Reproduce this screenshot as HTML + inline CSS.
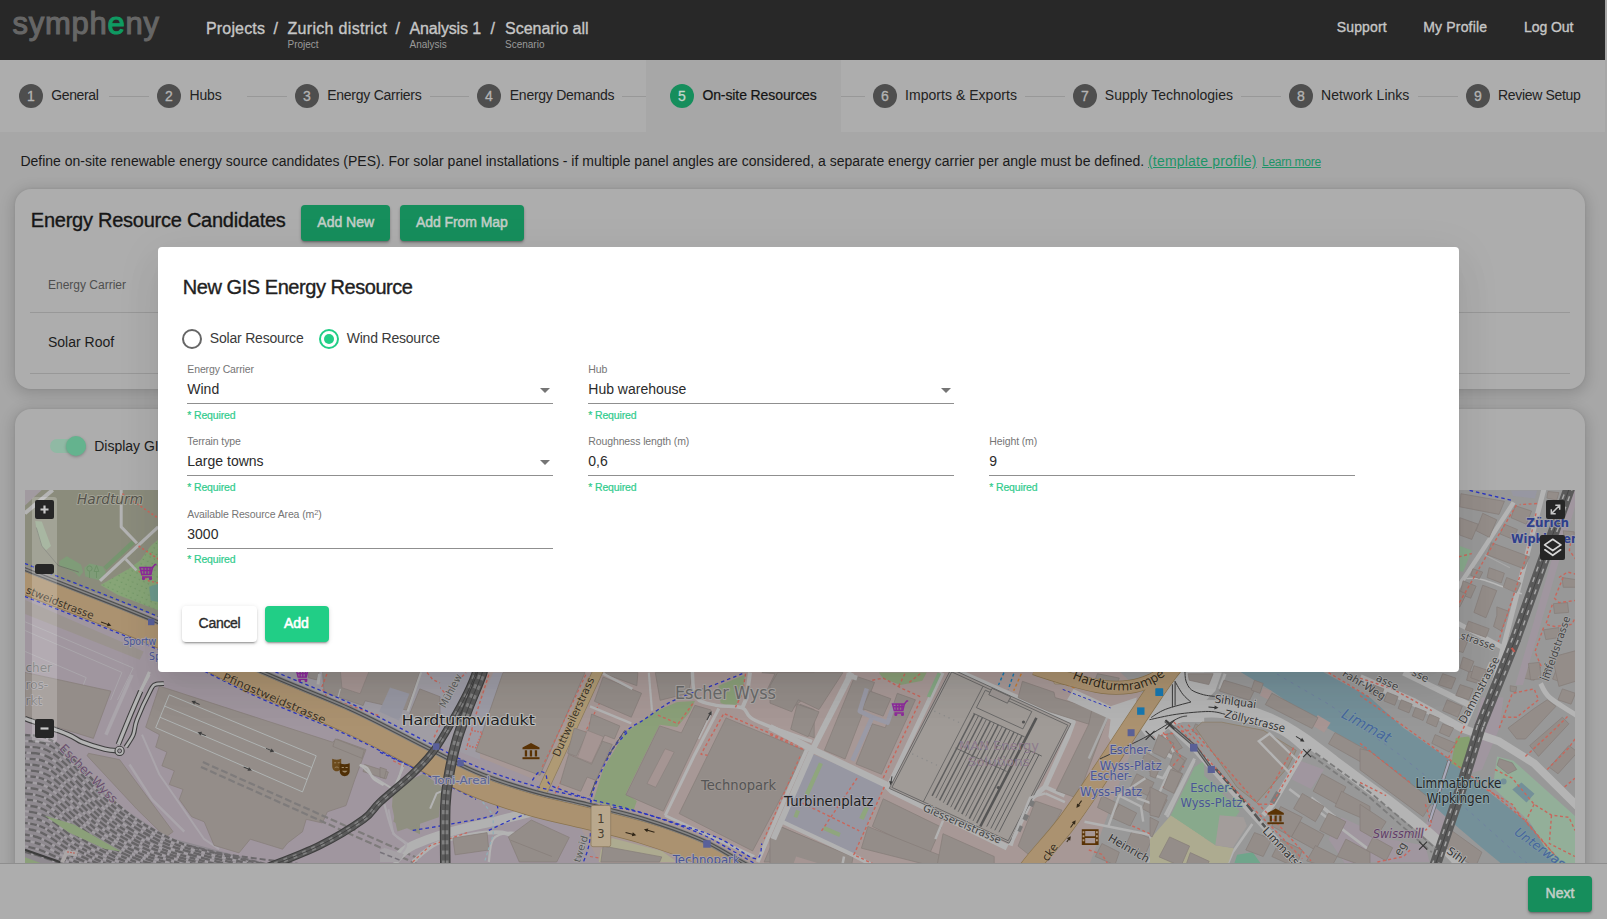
<!DOCTYPE html>
<html lang="en">
<head>
<meta charset="utf-8">
<title>Sympheny - On-site Resources</title>
<style>
*{box-sizing:border-box;margin:0;padding:0}
html,body{width:1607px;height:919px;overflow:hidden}
body{position:relative;background:#a7a7a7;font-family:"Liberation Sans",sans-serif;color:#1c1c1c}
.t{position:absolute;white-space:nowrap;line-height:1}
.md{-webkit-text-stroke:.35px currentColor}
#hdr{position:absolute;left:0;top:0;width:1605px;height:60px;background:#282828}
#logo{left:12.500px;top:8.200px;font-size:31px;color:#666;letter-spacing:.75px;-webkit-text-stroke:1.100px #666}
#logo b{font-weight:normal;color:#0f9a62;-webkit-text-stroke:1.100px #0f9a62}
.bc{font-size:16px;color:#c6c6c6;top:21.400px}
.bcs{font-size:10px;color:#9a9a9a;top:39.6px}
.nav{font-size:14px;color:#c6c6c6;top:20.2px}
#stp{position:absolute;left:0;top:60px;width:1605px;height:72px;background:#adadad}
#stp .act{position:absolute;left:646px;top:0;width:195px;height:72px;background:#a7a7a7}
.sc{-webkit-text-stroke:.3px currentColor;position:absolute;top:24px;width:24px;height:24px;border-radius:50%;background:#4e4e4e;color:#b4b4b4;font-size:14px;line-height:24px;text-align:center}
.sc.on{background:#168e5c;color:#c4d6cc}
.sl{font-size:14px;color:#222;top:28.2px}
.ln{position:absolute;top:36px;height:1px;background:#989898}
.card{position:absolute;background:#adadad;border-radius:16px;box-shadow:0 3px 14px 3px rgba(0,0,0,.14),0 0 3px rgba(0,0,0,.08)}
.gbtn{position:absolute;height:36px;border-radius:4px;background:#168e5c;box-shadow:0 2px 3px rgba(0,0,0,.25),0 1px 1px rgba(0,0,0,.15)}
.gbtn .t{font-size:14px;color:#c2cec8;top:10.2px;-webkit-text-stroke:.5px #c2cec8}
#map{position:absolute;left:25px;top:490px;width:1550px;height:373px;overflow:hidden;background:#a5a39e}
#map>svg{position:absolute;left:0;top:0}
.mb{position:absolute;background:#262626;border-radius:2px}
.mb svg{display:block}
#ftr{position:absolute;left:0;top:863px;width:1607px;height:56px;background:#adadad;border-top:1px solid #8e8e8e}
#dlg{position:absolute;left:158px;top:247px;width:1301px;height:425px;background:#fff;border-radius:4px;box-shadow:0 11px 15px -7px rgba(0,0,0,.05),0 24px 38px 3px rgba(0,0,0,.05),0 9px 46px 8px rgba(0,0,0,.04)}
#dlg .t{color:#2b2b2b}
.lab{font-size:10.5px;color:#757575 !important;letter-spacing:-.12px}
.val{font-size:14px}
.req{letter-spacing:-.15px;font-size:10.5px;color:#2fcb8c !important;-webkit-text-stroke:.2px #2fcb8c}
.ul{position:absolute;height:1px;background:#8f8f8f;width:366px}
.arr{position:absolute;width:0;height:0;border-left:5px solid transparent;border-right:5px solid transparent;border-top:5px solid #757575}
</style>
</head>
<body>
<!-- HEADER -->
<div id="hdr">
  <div id="logo" class="t">symph<b>e</b>ny</div>
  <div class="t bc md" style="left:206px;letter-spacing:.16px">Projects</div>
  <div class="t bc md" style="left:273.5px">/</div>
  <div class="t bc md" style="left:287.5px;letter-spacing:.31px">Zurich district</div>
  <div class="t bc md" style="left:395.5px">/</div>
  <div class="t bc md" style="left:409.5px;letter-spacing:-.15px">Analysis 1</div>
  <div class="t bc md" style="left:490.5px">/</div>
  <div class="t bc md" style="left:505px">Scenario all</div>
  <div class="t bcs" style="left:287.5px">Project</div>
  <div class="t bcs" style="left:409.5px">Analysis</div>
  <div class="t bcs" style="left:505px">Scenario</div>
  <div class="t nav md" style="left:1336.7px;letter-spacing:.16px">Support</div>
  <div class="t nav md" style="left:1423.2px;letter-spacing:.18px">My Profile</div>
  <div class="t nav md" style="left:1524px;letter-spacing:-.09px">Log Out</div>
</div>
<!-- STEPPER -->
<div id="stp">
  <div class="act"></div>
  <div class="sc" style="left:19px">1</div><div class="t sl" style="left:51.2px;letter-spacing:-.36px">General</div>
  <div class="ln" style="left:109px;width:40px"></div>
  <div class="sc" style="left:157px">2</div><div class="t sl" style="left:189.5px;letter-spacing:-.15px">Hubs</div>
  <div class="ln" style="left:247px;width:40px"></div>
  <div class="sc" style="left:295px">3</div><div class="t sl" style="left:327.2px;letter-spacing:-.25px">Energy Carriers</div>
  <div class="ln" style="left:430px;width:39px"></div>
  <div class="sc" style="left:477px">4</div><div class="t sl" style="left:509.8px;letter-spacing:-.26px">Energy Demands</div>
  <div class="ln" style="left:622px;width:24px"></div>
  <div class="sc on" style="left:670px">5</div><div class="t sl" style="left:702.4px;letter-spacing:-.1px;color:#141414;-webkit-text-stroke:.22px #141414">On-site Resources</div>
  <div class="ln" style="left:841px;width:24px"></div>
  <div class="sc" style="left:873px">6</div><div class="t sl" style="left:905px;letter-spacing:.04px">Imports &amp; Exports</div>
  <div class="ln" style="left:1025px;width:40px"></div>
  <div class="sc" style="left:1073px">7</div><div class="t sl" style="left:1104.8px">Supply Technologies</div>
  <div class="ln" style="left:1241px;width:40px"></div>
  <div class="sc" style="left:1289px">8</div><div class="t sl" style="left:1321.1px;letter-spacing:.03px">Network Links</div>
  <div class="ln" style="left:1418px;width:40px"></div>
  <div class="sc" style="left:1466px">9</div><div class="t sl" style="left:1498px;letter-spacing:-.33px">Review Setup</div>
</div>
<!-- DESCRIPTION -->
<div class="t" style="left:20.4px;top:153.8px;font-size:14px;color:#1a1a1a">Define on-site renewable energy source candidates (PES). For solar panel installations - if multiple panel angles are considered, a separate energy carrier per angle must be defined.</div>
<div class="t" style="left:1148px;top:153.8px;font-size:14px;color:#1d9467;text-decoration:underline;letter-spacing:.2px">(template profile)</div>
<div class="t" style="left:1262px;top:155.8px;font-size:12px;color:#1d9467;text-decoration:underline;letter-spacing:-.25px">Learn more</div>
<!-- CARD 1 -->
<div class="card" style="left:15px;top:189px;width:1570px;height:200px">
  <div class="t md" style="left:15.8px;top:21.1px;font-size:20px;color:#161616;letter-spacing:-.25px">Energy Resource Candidates</div>
  <div class="gbtn" style="left:286px;top:16px;width:89px"><div class="t md" style="left:16.3px">Add New</div></div>
  <div class="gbtn" style="left:385px;top:16px;width:124px"><div class="t md" style="left:16px;letter-spacing:-.07px">Add From Map</div></div>
  <div class="t" style="left:33px;top:89.9px;font-size:12px;color:#4f4f4f">Energy Carrier</div>
  <div style="position:absolute;left:15px;top:123px;width:1540px;height:1px;background:#989898"></div>
  <div class="t" style="left:33px;top:145.9px;font-size:14px;color:#1c1c1c">Solar Roof</div>
  <div style="position:absolute;left:15px;top:184px;width:1540px;height:1px;background:#989898"></div>
</div>
<!-- CARD 2 -->
<div class="card" style="left:15px;top:409px;width:1570px;height:520px">
  <div style="position:absolute;left:35px;top:30px;width:36px;height:14px;border-radius:7px;background:#90b9a4"></div>
  <div style="position:absolute;left:51px;top:27px;width:20px;height:20px;border-radius:50%;background:#64b38e;box-shadow:0 1px 3px rgba(0,0,0,.25)"></div>
  <div class="t" style="left:79.2px;top:29.5px;font-size:14px;color:#1c1c1c">Display GIS</div>
</div>
<!-- MAP -->
<div id="map">
<svg width="1550" height="373" viewBox="25 490 1550 373">
<path d="M25 490 L1575 490 L1575 863 L25 863Z" fill="#989898" />
<path d="M480 672 L1120 672 L1150 700 L1090 863 L480 863Z" fill="#a79896" />
<path d="M25 560 L158 615 L259 662 L420 733 L560 790 L600 863 L25 863Z" fill="#a0969f" />
<path d="M158 615 L480 672 L480 760 L259 672Z" fill="#9f9ba3" />
<path d="M25 490 L160 490 L160 618 L25 566Z" fill="#8b8c7c" />
<path d="M942.3 672.6 L889.4 784.3" fill="none" stroke="#b2b2b2" stroke-width="4.6" stroke-linecap="butt" stroke-linejoin="round" />
<path d="M953.6 669.4 L1073.3 722.0 L1067.8 736.8 L1045.0 786.9 L1031.9 798.2 L1012.3 839.1 L1010.2 845.6" fill="none" stroke="#b2b2b2" stroke-width="5" stroke-linecap="butt" stroke-linejoin="round" />
<path d="M1045.0 786.9 L1064.6 795.6" fill="none" stroke="#b2b2b2" stroke-width="4" stroke-linecap="butt" stroke-linejoin="round" />
<path d="M24.9 489.9 L41.8 489.9 L24.9 505.7Z" fill="#a19aa0" />
<path d="M24.9 513.3 L52.7 489.9" fill="none" stroke="#b4b4b4" stroke-width="4" stroke-linecap="butt" stroke-linejoin="round" />
<path d="M35.2 520.9 L41.8 521.5 L51.0 546.0 L46.1 550.3 L41.2 546.0 L36.3 528.5Z" fill="#93a58b" />
<path d="M59.2 561.2 L66.8 556.3 L81.0 564.5 L83.1 572.1 L79.3 577.0 L74.4 572.1 L59.2 566.1Z" fill="#7f9c78" />
<path d="M84.2 567.7 L89.7 563.4 L102.7 566.6 L106.0 572.1 L100.5 580.8 L85.3 576.4Z" fill="#7f9c78" />
<defs><pattern id="dots" width="5" height="5" patternUnits="userSpaceOnUse" patternTransform="rotate(25)"><rect width="5" height="5" fill="#87a577"/><circle cx="1.2" cy="1.2" r=".55" fill="#5f8a58"/></pattern></defs>
<path d="M158.2 539.4 L150.6 546.0 L140.8 560.1 L128.8 568.8 L113.6 577.5 L100.5 585.0 L118.0 594.9 L158.2 610.2Z" fill="url(#dots)" />
<path d="M149.1 586.7 L158.3 583.7 L158.3 602.0 L150.7 600.4Z" fill="#6d9a8d" />
<path d="M133.2 542.1 L104.9 568.3" fill="none" stroke="#76956f" stroke-width="4.5" stroke-linecap="butt" stroke-linejoin="round" />
<path d="M121.2 489.9 L121.2 526.9 L137.0 543.2" fill="none" stroke="#b3b3b3" stroke-width="3" stroke-linecap="butt" stroke-linejoin="round" />
<path d="M158.2 526.9 L100.0 580.8" fill="none" stroke="#b3b3b3" stroke-width="3.2" stroke-linecap="butt" stroke-linejoin="round" />
<path d="M125.6 559.0 L136.5 570.4" fill="none" stroke="#b3b3b3" stroke-width="2.6" stroke-linecap="butt" stroke-linejoin="round" />
<path d="M122.3 493.7 L158.2 518.2" fill="none" stroke="#c8675c" stroke-width="1.6" stroke-linecap="butt" stroke-linejoin="round" stroke-dasharray="2.2 2.2" />
<path d="M138.6 546.0 L158.2 559.0" fill="none" stroke="#c8675c" stroke-width="1.6" stroke-linecap="butt" stroke-linejoin="round" stroke-dasharray="2.2 2.2" />
<path d="M138.6 571.0 L148.4 580.8 L158.2 583.0" fill="none" stroke="#c8675c" stroke-width="1.4" stroke-linecap="butt" stroke-linejoin="round" stroke-dasharray="2.2 2.2" />
<path d="M36.3 527.5 L41.8 546.0 L58.1 565.5 L78.8 572.1" fill="none" stroke="#6f7067" stroke-width="0.8" stroke-linecap="butt" stroke-linejoin="round" />
<g stroke="#6f9169" stroke-width="1" fill="none"><circle cx="89.5" cy="568.5" r="2.6"/><path d="M89.5 571.2V578"/><path d="M96.5 565.5l2.4 6h-4.8zM96.5 571.5V578"/></g>
<g transform="translate(140 566) scale(1)" stroke="#8e2a9c" stroke-width="1.5" fill="none"><path d="M0 1.5h12.5l-1.6 7H1.8z" fill="#8e2a9c" fill-opacity=".25"/><path d="M12.5 1.5L15 -1.5h1.5M2 11h10M4 1.5v7M7 1.5v7M10 1.5v7M1 4.5h11"/><circle cx="3.5" cy="12.6" r=".9"/><circle cx="10.5" cy="12.6" r=".9"/></g>
<path d="M25.2 600.1 L143.7 651.5 L139.8 659.8 L25.2 614.0Z" fill="#9a938f" />
<path d="M25.2 621.9 L133.2 668.0 L117.5 700.0" fill="none" stroke="#aaa6ab" stroke-width="1" stroke-linecap="butt" stroke-linejoin="round" />
<path d="M25.2 630.6 L121.9 672.4 L110.6 700.0" fill="none" stroke="#aaa6ab" stroke-width="1" stroke-linecap="butt" stroke-linejoin="round" />
<path d="M25.2 651.5 L86.2 677.6 L77.5 700.0" fill="none" stroke="#aaa6ab" stroke-width="1" stroke-linecap="butt" stroke-linejoin="round" />
<path d="M25.0 672.4 L110.9 691.1 L93.4 738.4 L25.0 717.2Z" fill="#948d89" stroke="#857d78" stroke-width="0.7" />
<path d="M88.5 753.3 L119.6 759.6 L173.1 831.7 L165.6 837.2 L137.0 809.3 L87.2 755.8Z" fill="#948d89" stroke="#857d78" stroke-width="0.7" />
<path d="M25.0 769.5 L34.9 772.0 L32.4 784.5 L25.0 783.2Z" fill="#948d89" stroke="#857d78" stroke-width="0.7" />
<path d="M132.0 674.9 L105.9 734.7" fill="none" stroke="#aaa5ab" stroke-width="3.5" stroke-linecap="butt" stroke-linejoin="round" />
<path d="M149.4 674.9 L139.5 692.4" fill="none" stroke="#b2b2b2" stroke-width="2.5" stroke-linecap="butt" stroke-linejoin="round" />
<path d="M129.5 764.5 L151.9 799.4 L184.3 831.7" fill="none" stroke="#aaa5ab" stroke-width="2.5" stroke-linecap="butt" stroke-linejoin="round" />
<path d="M142.0 734.7 L159.4 774.5 L204.2 839.2 L219.1 849.2" fill="none" stroke="#aaa5ab" stroke-width="2" stroke-linecap="butt" stroke-linejoin="round" />
<path d="M25 735 L57 744 L118 805 L167 837 L265 863 L25 863Z" fill="#8f8a90" />
<path d="M25.0 735.0 C30.3 736.5 41.5 732.3 57.0 744.0 C72.5 755.7 99.7 789.5 118.0 805.0 C136.3 820.5 150.8 829.0 167.0 837.0 C183.2 845.0 192.8 847.2 215.0 853.0 C237.2 858.8 285.8 868.8 300.0 872.0" fill="none" stroke="#a29ea3" stroke-width="2.2" stroke-linecap="butt" />
<path d="M25.0 735.0 C30.3 736.5 41.5 732.3 57.0 744.0 C72.5 755.7 99.7 789.5 118.0 805.0 C136.3 820.5 150.8 829.0 167.0 837.0 C183.2 845.0 192.8 847.2 215.0 853.0 C237.2 858.8 285.8 868.8 300.0 872.0" fill="none" stroke="#666466" stroke-width="2.4" stroke-linecap="butt" stroke-dasharray="5.5 2.5" stroke-dashoffset="0"/>
<path d="M25.0 740.9 C30.2 742.4 41.1 738.4 56.1 749.6 C71.1 760.8 97.3 793.1 115.1 807.9 C132.9 822.7 147.0 830.9 162.7 838.6 C178.4 846.3 187.7 848.5 209.2 854.2 C230.7 859.9 277.8 869.8 291.5 872.9" fill="none" stroke="#a29ea3" stroke-width="2.2" stroke-linecap="butt" />
<path d="M25.0 740.9 C30.2 742.4 41.1 738.4 56.1 749.6 C71.1 760.8 97.3 793.1 115.1 807.9 C132.9 822.7 147.0 830.9 162.7 838.6 C178.4 846.3 187.7 848.5 209.2 854.2 C230.7 859.9 277.8 869.8 291.5 872.9" fill="none" stroke="#666466" stroke-width="2.4" stroke-linecap="butt" stroke-dasharray="6.7 4.0" stroke-dashoffset="7"/>
<path d="M25.0 746.7 C30.1 748.1 40.8 744.5 55.3 755.2 C69.8 765.9 95.0 796.6 112.2 810.8 C129.4 825.0 143.1 832.8 158.3 840.3 C173.5 847.8 182.7 849.9 203.5 855.5 C224.3 861.1 269.8 870.8 283.0 873.8" fill="none" stroke="#a29ea3" stroke-width="2.2" stroke-linecap="butt" />
<path d="M25.0 746.7 C30.1 748.1 40.8 744.5 55.3 755.2 C69.8 765.9 95.0 796.6 112.2 810.8 C129.4 825.0 143.1 832.8 158.3 840.3 C173.5 847.8 182.7 849.9 203.5 855.5 C224.3 861.1 269.8 870.8 283.0 873.8" fill="none" stroke="#666466" stroke-width="2.4" stroke-linecap="butt" stroke-dasharray="7.9 3.0" stroke-dashoffset="14"/>
<path d="M25.0 752.5 C29.9 753.9 40.4 750.6 54.4 760.8 C68.5 771.0 92.7 800.2 109.3 813.7 C125.9 827.2 139.2 834.7 153.9 841.9 C168.7 849.1 177.7 851.3 197.8 856.8 C217.9 862.3 261.7 871.7 274.5 874.7" fill="none" stroke="#a29ea3" stroke-width="2.2" stroke-linecap="butt" />
<path d="M25.0 752.5 C29.9 753.9 40.4 750.6 54.4 760.8 C68.5 771.0 92.7 800.2 109.3 813.7 C125.9 827.2 139.2 834.7 153.9 841.9 C168.7 849.1 177.7 851.3 197.8 856.8 C217.9 862.3 261.7 871.7 274.5 874.7" fill="none" stroke="#666466" stroke-width="2.4" stroke-linecap="butt" stroke-dasharray="9.1 4.5" stroke-dashoffset="21"/>
<path d="M25.0 758.4 C29.8 759.7 40.0 756.7 53.6 766.4 C67.2 776.1 90.4 803.7 106.4 816.6 C122.4 829.5 135.3 836.7 149.6 843.6 C163.9 850.5 172.6 852.7 192.0 858.0 C211.4 863.3 253.7 872.7 266.0 875.6" fill="none" stroke="#a29ea3" stroke-width="2.2" stroke-linecap="butt" />
<path d="M25.0 758.4 C29.8 759.7 40.0 756.7 53.6 766.4 C67.2 776.1 90.4 803.7 106.4 816.6 C122.4 829.5 135.3 836.7 149.6 843.6 C163.9 850.5 172.6 852.7 192.0 858.0 C211.4 863.3 253.7 872.7 266.0 875.6" fill="none" stroke="#666466" stroke-width="2.4" stroke-linecap="butt" stroke-dasharray="6.1 3.5" stroke-dashoffset="5"/>
<path d="M25.0 764.2 C29.6 765.5 39.7 762.8 52.8 772.0 C65.9 781.2 88.1 807.3 103.5 819.5 C118.9 831.7 131.4 838.6 145.2 845.2 C159.0 851.8 167.5 854.0 186.2 859.2 C204.9 864.4 245.6 873.6 257.5 876.5" fill="none" stroke="#a29ea3" stroke-width="2.2" stroke-linecap="butt" />
<path d="M25.0 764.2 C29.6 765.5 39.7 762.8 52.8 772.0 C65.9 781.2 88.1 807.3 103.5 819.5 C118.9 831.7 131.4 838.6 145.2 845.2 C159.0 851.8 167.5 854.0 186.2 859.2 C204.9 864.4 245.6 873.6 257.5 876.5" fill="none" stroke="#666466" stroke-width="2.4" stroke-linecap="butt" stroke-dasharray="7.3 2.5" stroke-dashoffset="12"/>
<path d="M25.0 770.1 C29.5 771.4 39.3 768.9 51.9 777.6 C64.5 786.3 85.8 810.9 100.6 822.4 C115.4 833.9 127.6 840.5 140.9 846.9 C154.2 853.2 162.5 855.4 180.5 860.5 C198.5 865.6 237.6 874.6 249.0 877.4" fill="none" stroke="#a29ea3" stroke-width="2.2" stroke-linecap="butt" />
<path d="M25.0 770.1 C29.5 771.4 39.3 768.9 51.9 777.6 C64.5 786.3 85.8 810.9 100.6 822.4 C115.4 833.9 127.6 840.5 140.9 846.9 C154.2 853.2 162.5 855.4 180.5 860.5 C198.5 865.6 237.6 874.6 249.0 877.4" fill="none" stroke="#666466" stroke-width="2.4" stroke-linecap="butt" stroke-dasharray="8.5 4.0" stroke-dashoffset="19"/>
<path d="M25.0 776.0 C29.4 777.2 39.0 775.0 51.1 783.2 C63.2 791.4 83.5 814.4 97.7 825.3 C112.0 836.2 123.8 842.5 136.6 848.6 C149.4 854.7 157.5 856.8 174.8 861.8 C192.1 866.8 229.6 875.5 240.5 878.3" fill="none" stroke="#a29ea3" stroke-width="2.2" stroke-linecap="butt" />
<path d="M25.0 776.0 C29.4 777.2 39.0 775.0 51.1 783.2 C63.2 791.4 83.5 814.4 97.7 825.3 C112.0 836.2 123.8 842.5 136.6 848.6 C149.4 854.7 157.5 856.8 174.8 861.8 C192.1 866.8 229.6 875.5 240.5 878.3" fill="none" stroke="#666466" stroke-width="2.4" stroke-linecap="butt" stroke-dasharray="5.5 3.0" stroke-dashoffset="3"/>
<path d="M25.0 781.8 C29.2 783.0 38.6 781.1 50.2 788.8 C61.8 796.5 81.1 818.0 94.8 828.2 C108.5 838.4 119.8 844.4 132.2 850.2 C144.6 856.0 152.4 858.2 169.0 863.0 C185.6 867.8 221.5 876.5 232.0 879.2" fill="none" stroke="#a29ea3" stroke-width="2.2" stroke-linecap="butt" />
<path d="M25.0 781.8 C29.2 783.0 38.6 781.1 50.2 788.8 C61.8 796.5 81.1 818.0 94.8 828.2 C108.5 838.4 119.8 844.4 132.2 850.2 C144.6 856.0 152.4 858.2 169.0 863.0 C185.6 867.8 221.5 876.5 232.0 879.2" fill="none" stroke="#666466" stroke-width="2.4" stroke-linecap="butt" stroke-dasharray="6.7 4.5" stroke-dashoffset="10"/>
<path d="M25.0 787.7 C29.1 788.8 38.2 787.2 49.4 794.4 C60.5 801.6 78.8 821.5 91.9 831.1 C105.0 840.7 116.0 846.4 127.9 851.9 C139.8 857.4 147.3 859.5 163.2 864.2 C179.1 868.9 213.4 877.5 223.5 880.1" fill="none" stroke="#a29ea3" stroke-width="2.2" stroke-linecap="butt" />
<path d="M25.0 787.7 C29.1 788.8 38.2 787.2 49.4 794.4 C60.5 801.6 78.8 821.5 91.9 831.1 C105.0 840.7 116.0 846.4 127.9 851.9 C139.8 857.4 147.3 859.5 163.2 864.2 C179.1 868.9 213.4 877.5 223.5 880.1" fill="none" stroke="#666466" stroke-width="2.4" stroke-linecap="butt" stroke-dasharray="7.9 3.5" stroke-dashoffset="17"/>
<path d="M25.0 793.5 C28.9 794.6 37.8 793.2 48.5 800.0 C59.2 806.8 76.5 825.1 89.0 834.0 C101.5 842.9 112.1 848.2 123.5 853.5 C134.9 858.8 142.2 860.9 157.5 865.5 C172.8 870.1 205.4 878.4 215.0 881.0" fill="none" stroke="#a29ea3" stroke-width="2.2" stroke-linecap="butt" />
<path d="M25.0 793.5 C28.9 794.6 37.8 793.2 48.5 800.0 C59.2 806.8 76.5 825.1 89.0 834.0 C101.5 842.9 112.1 848.2 123.5 853.5 C134.9 858.8 142.2 860.9 157.5 865.5 C172.8 870.1 205.4 878.4 215.0 881.0" fill="none" stroke="#666466" stroke-width="2.4" stroke-linecap="butt" stroke-dasharray="9.1 2.5" stroke-dashoffset="1"/>
<path d="M25.0 799.3 C28.8 800.3 37.4 799.3 47.6 805.6 C57.8 811.9 74.2 828.6 86.1 836.9 C98.0 845.2 108.1 850.2 119.1 855.2 C130.1 860.2 137.2 862.3 151.8 866.8 C166.4 871.2 197.4 879.4 206.5 881.9" fill="none" stroke="#a29ea3" stroke-width="2.2" stroke-linecap="butt" />
<path d="M25.0 799.3 C28.8 800.3 37.4 799.3 47.6 805.6 C57.8 811.9 74.2 828.6 86.1 836.9 C98.0 845.2 108.1 850.2 119.1 855.2 C130.1 860.2 137.2 862.3 151.8 866.8 C166.4 871.2 197.4 879.4 206.5 881.9" fill="none" stroke="#666466" stroke-width="2.4" stroke-linecap="butt" stroke-dasharray="6.1 4.0" stroke-dashoffset="8"/>
<path d="M25.0 805.2 C28.6 806.2 37.1 805.4 46.8 811.2 C56.5 817.0 71.9 832.2 83.2 839.8 C94.5 847.4 104.3 852.1 114.8 856.8 C125.3 861.5 132.1 863.7 146.0 868.0 C159.9 872.3 189.3 880.3 198.0 882.8" fill="none" stroke="#a29ea3" stroke-width="2.2" stroke-linecap="butt" />
<path d="M25.0 805.2 C28.6 806.2 37.1 805.4 46.8 811.2 C56.5 817.0 71.9 832.2 83.2 839.8 C94.5 847.4 104.3 852.1 114.8 856.8 C125.3 861.5 132.1 863.7 146.0 868.0 C159.9 872.3 189.3 880.3 198.0 882.8" fill="none" stroke="#666466" stroke-width="2.4" stroke-linecap="butt" stroke-dasharray="7.3 3.0" stroke-dashoffset="15"/>
<path d="M25.0 811.1 C28.5 812.0 36.8 811.5 46.0 816.8 C55.2 822.1 69.6 835.8 80.3 842.7 C91.0 849.7 100.4 854.1 110.4 858.5 C120.4 862.9 127.0 865.0 140.2 869.2 C153.4 873.4 181.3 881.3 189.5 883.7" fill="none" stroke="#a29ea3" stroke-width="2.2" stroke-linecap="butt" />
<path d="M25.0 811.1 C28.5 812.0 36.8 811.5 46.0 816.8 C55.2 822.1 69.6 835.8 80.3 842.7 C91.0 849.7 100.4 854.1 110.4 858.5 C120.4 862.9 127.0 865.0 140.2 869.2 C153.4 873.4 181.3 881.3 189.5 883.7" fill="none" stroke="#666466" stroke-width="2.4" stroke-linecap="butt" stroke-dasharray="8.5 4.5" stroke-dashoffset="22"/>
<path d="M25.0 816.9 C28.4 817.8 36.4 817.6 45.1 822.4 C53.8 827.2 67.2 839.3 77.4 845.6 C87.6 851.9 96.6 856.0 106.1 860.1 C115.6 864.2 122.0 866.4 134.5 870.5 C147.0 874.6 173.2 882.2 181.0 884.6" fill="none" stroke="#a29ea3" stroke-width="2.2" stroke-linecap="butt" />
<path d="M25.0 816.9 C28.4 817.8 36.4 817.6 45.1 822.4 C53.8 827.2 67.2 839.3 77.4 845.6 C87.6 851.9 96.6 856.0 106.1 860.1 C115.6 864.2 122.0 866.4 134.5 870.5 C147.0 874.6 173.2 882.2 181.0 884.6" fill="none" stroke="#666466" stroke-width="2.4" stroke-linecap="butt" stroke-dasharray="5.5 3.5" stroke-dashoffset="6"/>
<path d="M25.0 822.8 C28.2 823.7 36.0 823.7 44.2 828.0 C52.5 832.3 64.9 842.9 74.5 848.5 C84.1 854.1 92.8 857.9 101.8 861.8 C110.8 865.7 117.0 867.8 128.8 871.8 C140.6 875.8 165.2 883.2 172.5 885.5" fill="none" stroke="#a29ea3" stroke-width="2.2" stroke-linecap="butt" />
<path d="M25.0 822.8 C28.2 823.7 36.0 823.7 44.2 828.0 C52.5 832.3 64.9 842.9 74.5 848.5 C84.1 854.1 92.8 857.9 101.8 861.8 C110.8 865.7 117.0 867.8 128.8 871.8 C140.6 875.8 165.2 883.2 172.5 885.5" fill="none" stroke="#666466" stroke-width="2.4" stroke-linecap="butt" stroke-dasharray="6.7 2.5" stroke-dashoffset="13"/>
<path d="M25.0 828.6 C28.1 829.4 35.6 829.8 43.4 833.6 C51.2 837.4 62.6 846.4 71.6 851.4 C80.6 856.4 88.8 859.8 97.4 863.4 C106.0 867.0 111.9 869.2 123.0 873.0 C134.1 876.8 157.2 884.2 164.0 886.4" fill="none" stroke="#a29ea3" stroke-width="2.2" stroke-linecap="butt" />
<path d="M25.0 828.6 C28.1 829.4 35.6 829.8 43.4 833.6 C51.2 837.4 62.6 846.4 71.6 851.4 C80.6 856.4 88.8 859.8 97.4 863.4 C106.0 867.0 111.9 869.2 123.0 873.0 C134.1 876.8 157.2 884.2 164.0 886.4" fill="none" stroke="#666466" stroke-width="2.4" stroke-linecap="butt" stroke-dasharray="7.9 4.0" stroke-dashoffset="20"/>
<path d="M25.0 834.4 C27.9 835.2 35.2 835.9 42.5 839.2 C49.8 842.5 60.3 850.0 68.7 854.3 C77.1 858.6 85.0 861.8 93.1 865.1 C101.2 868.4 106.8 870.5 117.2 874.2 C127.6 877.9 149.1 885.1 155.5 887.3" fill="none" stroke="#a29ea3" stroke-width="2.2" stroke-linecap="butt" />
<path d="M25.0 834.4 C27.9 835.2 35.2 835.9 42.5 839.2 C49.8 842.5 60.3 850.0 68.7 854.3 C77.1 858.6 85.0 861.8 93.1 865.1 C101.2 868.4 106.8 870.5 117.2 874.2 C127.6 877.9 149.1 885.1 155.5 887.3" fill="none" stroke="#666466" stroke-width="2.4" stroke-linecap="butt" stroke-dasharray="9.1 3.0" stroke-dashoffset="4"/>
<path d="M25.0 840.3 C27.8 841.0 34.9 842.0 41.7 844.8 C48.5 847.6 58.0 853.6 65.8 857.2 C73.6 860.9 81.1 863.7 88.7 866.7 C96.3 869.8 101.8 871.9 111.5 875.5 C121.2 879.1 141.1 886.1 147.0 888.2" fill="none" stroke="#a29ea3" stroke-width="2.2" stroke-linecap="butt" />
<path d="M25.0 840.3 C27.8 841.0 34.9 842.0 41.7 844.8 C48.5 847.6 58.0 853.6 65.8 857.2 C73.6 860.9 81.1 863.7 88.7 866.7 C96.3 869.8 101.8 871.9 111.5 875.5 C121.2 879.1 141.1 886.1 147.0 888.2" fill="none" stroke="#666466" stroke-width="2.4" stroke-linecap="butt" stroke-dasharray="6.1 4.5" stroke-dashoffset="11"/>
<path d="M25.0 846.1 C27.6 846.8 34.6 848.1 40.9 850.4 C47.2 852.7 55.6 857.1 62.9 860.1 C70.2 863.1 77.2 865.6 84.4 868.4 C91.6 871.2 96.8 873.3 105.8 876.8 C114.8 880.2 133.1 887.0 138.5 889.1" fill="none" stroke="#a29ea3" stroke-width="2.2" stroke-linecap="butt" />
<path d="M25.0 846.1 C27.6 846.8 34.6 848.1 40.9 850.4 C47.2 852.7 55.6 857.1 62.9 860.1 C70.2 863.1 77.2 865.6 84.4 868.4 C91.6 871.2 96.8 873.3 105.8 876.8 C114.8 880.2 133.1 887.0 138.5 889.1" fill="none" stroke="#666466" stroke-width="2.4" stroke-linecap="butt" stroke-dasharray="7.3 3.5" stroke-dashoffset="18"/>
<path d="M25.0 852.0 C27.5 852.7 34.2 854.2 40.0 856.0 C45.8 857.8 53.3 860.7 60.0 863.0 C66.7 865.3 73.3 867.5 80.0 870.0 C86.7 872.5 91.7 874.7 100.0 878.0 C108.3 881.3 125.0 888.0 130.0 890.0" fill="none" stroke="#a29ea3" stroke-width="2.2" stroke-linecap="butt" />
<path d="M25.0 852.0 C27.5 852.7 34.2 854.2 40.0 856.0 C45.8 857.8 53.3 860.7 60.0 863.0 C66.7 865.3 73.3 867.5 80.0 870.0 C86.7 872.5 91.7 874.7 100.0 878.0 C108.3 881.3 125.0 888.0 130.0 890.0" fill="none" stroke="#666466" stroke-width="2.4" stroke-linecap="butt" stroke-dasharray="8.5 2.5" stroke-dashoffset="2"/>
<path d="M215 853 L420 880" fill="none" stroke="#6c696c" stroke-width="2" stroke-linecap="butt" stroke-linejoin="round" stroke-dasharray="6 3" />
<path d="M190 846 L300 872" fill="none" stroke="#6c696c" stroke-width="2" stroke-linecap="butt" stroke-linejoin="round" stroke-dasharray="6 3" />
<path d="M44.5 815.5 L73.9 824.4 L121.2 851.4 L104.9 848.9 L69.0 832.6Z" fill="#8ba079" />
<path d="M24.9 857.1 L41.2 863.3 L24.9 863.3Z" fill="#8ba079" />
<path d="M24.9 849.7 L60.8 862.3" fill="none" stroke="#3c3c3c" stroke-width="2.2" stroke-linecap="butt" stroke-linejoin="round" />
<path d="M65.7 849.7 L77.9 851.4 L77.1 856.3 L67.3 855.4 L64.1 862.8 L60.0 862.3Z" fill="#aaa6a6" />
<path d="M67.3 851.9 L76.3 853.5" fill="none" stroke="#c0584e" stroke-width="1.2" stroke-linecap="butt" stroke-linejoin="round" stroke-dasharray="1.5 1.5" />
<path d="M159.4 686.1 L332.4 742.1 L337 739 L366 749.6 L354.8 779.5 L346 805.6 L327.4 811.8 L322.4 823 L306.2 819.3 L302.5 831.7 L287.6 843 L282.6 849.2 L250.2 839.2 L239 852.9 L214.1 845.4 L204.2 821.8 L191.7 816.8 L179.3 799.4 L183 789.4 L169.3 784.5 L174.3 770.8 L161.9 765.8 L166.9 752.1 L155.7 747.1 L159.4 734.7 L145.7 727.2Z" fill="#948d89" stroke="#857d78" stroke-width="0.7" />
<path d="M169.3 694.8 L316.2 755.8 L302.5 791.9 L155.7 727.7Z" fill="none" stroke="#b5bcbc" stroke-width="0.8" />
<path d="M164.4 706.0 L311.7 767.5" fill="none" stroke="#b5bcbc" stroke-width="0.8" stroke-linecap="butt" stroke-linejoin="round" />
<path d="M159.9 717.2 L307.0 779.5" fill="none" stroke="#b5bcbc" stroke-width="0.8" stroke-linecap="butt" stroke-linejoin="round" />
<g transform="translate(195.5 702.8) rotate(203)" stroke="#3e3e3e" fill="#3e3e3e"><path d="M-4.5 0H2.5" stroke-width="1"/><path d="M4.5 0l-4 -2v4z" stroke="none"/></g>
<g transform="translate(201.7 733.9) rotate(203)" stroke="#3e3e3e" fill="#3e3e3e"><path d="M-4.5 0H2.5" stroke-width="1"/><path d="M4.5 0l-4 -2v4z" stroke="none"/></g>
<g transform="translate(270.2 750.1) rotate(23)" stroke="#3e3e3e" fill="#3e3e3e"><path d="M-4.5 0H2.5" stroke-width="1"/><path d="M4.5 0l-4 -2v4z" stroke="none"/></g>
<g transform="translate(247.8 768.8) rotate(23)" stroke="#3e3e3e" fill="#3e3e3e"><path d="M-4.5 0H2.5" stroke-width="1"/><path d="M4.5 0l-4 -2v4z" stroke="none"/></g>
<path d="M202.9 762.1 L420.0 859.1" fill="none" stroke="#7e7b7b" stroke-width="2.2" stroke-linecap="butt" stroke-linejoin="round" stroke-dasharray="7 3" />
<path d="M201.0 767.0 L418.3 864.6" fill="none" stroke="#7e7b7b" stroke-width="2.2" stroke-linecap="butt" stroke-linejoin="round" stroke-dasharray="7 3" />
<path d="M364.7 764.5 L388.4 772.0 L385.9 779.0 L363.0 771.5Z" fill="#948d89" stroke="#857d78" stroke-width="0.7" />
<path d="M398.3 799.4 L420.0 806.9 L420.0 834.2 L393.4 821.8Z" fill="#8f8f80" />
<path d="M359.8 764.5 L373.5 777.0 L393.4 789.4 L403.3 767.0" fill="none" stroke="#b2b2b2" stroke-width="2" stroke-linecap="butt" stroke-linejoin="round" />
<path d="M388.4 809.3 L393.4 834.2 L408.3 844.2" fill="none" stroke="#aaa5ab" stroke-width="2" stroke-linecap="butt" stroke-linejoin="round" />
<path d="M25.0 718.5 C32.0 721.1 57.8 730.3 67.3 734.2 C76.8 738.1 76.0 739.6 82.2 742.1 C88.4 744.6 98.4 747.6 104.6 749.1 C110.8 750.6 117.1 750.6 119.6 750.9" fill="none" stroke="#3f3f3f" stroke-width="5.4" stroke-linecap="butt" />
<path d="M25.0 718.5 C32.0 721.1 57.8 730.3 67.3 734.2 C76.8 738.1 76.0 739.6 82.2 742.1 C88.4 744.6 98.4 747.6 104.6 749.1 C110.8 750.6 117.1 750.6 119.6 750.9" fill="none" stroke="#b4b4b4" stroke-width="3.2" stroke-linecap="butt" />
<circle cx="119.6" cy="750.9" r="4.6" fill="#b4b4b4" stroke="#3f3f3f" stroke-width="1.1"/><circle cx="119.6" cy="750.9" r="2" fill="#9a949b" stroke="#3f3f3f" stroke-width=".9"/>
<path d="M118.3 744.6 C120.2 740.0 125.8 726.1 129.5 717.2 C133.2 708.3 138.8 695.5 140.7 691.1" fill="none" stroke="#3f3f3f" stroke-width="5.4" stroke-linecap="butt" />
<path d="M118.3 744.6 C120.2 740.0 125.8 726.1 129.5 717.2 C133.2 708.3 138.8 695.5 140.7 691.1" fill="none" stroke="#b4b4b4" stroke-width="3.2" stroke-linecap="butt" />
<path d="M125.8 747.1 C127.0 745.0 131.4 739.3 133.3 734.7 C135.2 730.1 134.1 727.2 137.0 719.7 C139.9 712.2 147.6 695.8 150.7 689.9 C153.8 684.0 153.5 685.4 155.7 684.4 C157.9 683.4 162.5 683.7 163.9 683.6" fill="none" stroke="#3f3f3f" stroke-width="4.800000000000001" stroke-linecap="butt" />
<path d="M125.8 747.1 C127.0 745.0 131.4 739.3 133.3 734.7 C135.2 730.1 134.1 727.2 137.0 719.7 C139.9 712.2 147.6 695.8 150.7 689.9 C153.8 684.0 153.5 685.4 155.7 684.4 C157.9 683.4 162.5 683.7 163.9 683.6" fill="none" stroke="#b4b4b4" stroke-width="2.6" stroke-linecap="butt" />
<path d="M140.7 691.1 L149.4 671.9" fill="none" stroke="#b2b2b2" stroke-width="3" stroke-linecap="butt" stroke-linejoin="round" />
<path d="M380.0 672.6 L476.8 672.6 L434.4 748.8 L380.0 725.9Z" fill="#9d9ca6" />
<path d="M380.0 672.6 L415.9 672.6 L408.3 691.1 L388.7 685.7 L380.0 706.3Z" fill="#948d89" stroke="#857d78" stroke-width="0.7" />
<path d="M415.9 688.5 L439.8 697.6 L428.3 728.5 L404.4 719.4Z" fill="#948d89" stroke="#857d78" stroke-width="0.7" />
<path d="M493.2 672.6 L506.2 672.6 L482.3 736.8 L467.1 730.3Z" fill="#9d9ca6" />
<path d="M503.0 672.6 L585.0 672.6 L540.0 775.3 L475.8 751.4Z" fill="#97908b" stroke="#857d78" stroke-width="0.7" />
<path d="M598.7 669.4 L541.5 793.4" fill="none" stroke="#8d7c5c" stroke-width="10.6" stroke-linecap="butt" stroke-linejoin="round" />
<path d="M598.7 669.4 L541.5 793.4" fill="none" stroke="#af9a74" stroke-width="9.2" stroke-linecap="butt" stroke-linejoin="round" />
<path d="M393.1 788.0 L423.5 773.8 L442.0 786.9 L438.8 817.3 L397.4 831.5 L392.0 806.5Z" fill="#8f8f81" />
<path d="M393.1 862.0 C396.0 859.5 400.7 851.8 410.5 846.7 C420.3 841.6 437.3 835.9 451.8 831.5 C466.3 827.1 484.1 823.9 497.5 820.6 C510.9 817.3 526.5 813.4 532.3 811.9" fill="none" stroke="#b1b1b1" stroke-width="9" stroke-linecap="butt" />
<path d="M412.6 862.0 C416.6 858.9 426.8 848.0 436.6 843.5 C446.4 839.0 460.5 836.5 471.4 834.7 C482.3 832.9 493.9 831.9 501.9 832.6 C509.9 833.3 516.4 838.0 519.3 839.1" fill="none" stroke="#b1b1b1" stroke-width="4" stroke-linecap="butt" />
<path d="M384.4 804.3 C385.8 809.0 389.5 825.7 393.1 832.6 C396.7 839.5 406.1 840.7 406.1 845.6 C406.1 850.5 395.3 859.3 393.1 862.0" fill="none" stroke="#aba7ac" stroke-width="2.2" stroke-linecap="butt" />
<path d="M430.1 808.6 L436.6 793.4 L451.8 786.9" fill="none" stroke="#b3b3b3" stroke-width="2" stroke-linecap="butt" stroke-linejoin="round" />
<path d="M488.8 862.0 C489.5 858.2 489.6 844.0 493.2 839.1 C496.8 834.2 504.1 833.0 510.6 832.6 C517.1 832.2 528.7 836.2 532.3 836.9" fill="none" stroke="#b3b3b3" stroke-width="2.2" stroke-linecap="butt" />
<path d="M452.9 838.0 L487.1 832.6 L488.8 850.0 L455.1 854.8Z" fill="#948d89" stroke="#857d78" stroke-width="0.7" />
<path d="M508.4 836.9 L531.3 820.0 L569.3 837.4 L556.7 862.0 L519.3 862.0Z" fill="#948d89" stroke="#857d78" stroke-width="0.7" />
<path d="M510.6 840.2 L551.9 856.5" fill="none" stroke="#857d78" stroke-width="0.7" stroke-linecap="butt" stroke-linejoin="round" />
<path d="M380.0 767.3 L386.5 769.5 L384.4 778.2 L380.0 777.1Z" fill="#948d89" stroke="#857d78" stroke-width="0.7" />
<path d="M384.4 847.8 L403.9 854.3 L399.6 862.0 L380.0 862.0 L380.0 850.0Z" fill="#a5a1a5" />
<path d="M380.0 852.2 L401.8 860.9" fill="none" stroke="#77737a" stroke-width="1.6" stroke-linecap="butt" stroke-linejoin="round" stroke-dasharray="5 3" />
<path d="M426.8 674.8 L445.3 693.3 L466.0 672.6" fill="none" stroke="#c8675c" stroke-width="1.4" stroke-linecap="butt" stroke-linejoin="round" stroke-dasharray="3 2.5" />
<path d="M488.8 674.8 L475.8 715.1 L466.0 749.9" fill="none" stroke="#c8675c" stroke-width="1.4" stroke-linecap="butt" stroke-linejoin="round" stroke-dasharray="3 2.5" />
<path d="M585.7 674.8 L542.1 767.3" fill="none" stroke="#c8675c" stroke-width="1.2" stroke-linecap="butt" stroke-linejoin="round" stroke-dasharray="3 2.5" />
<path d="M600.0 702.0 L554.1 795.6" fill="none" stroke="#c8675c" stroke-width="1.2" stroke-linecap="butt" stroke-linejoin="round" stroke-dasharray="3 2.5" />
<path d="M471.4 730.3 L482.3 732.5 L475.8 747.7 L467.1 745.5" fill="none" stroke="#c8675c" stroke-width="1.6" stroke-linecap="butt" stroke-linejoin="round" stroke-dasharray="1.5 1.5" />
<path d="M412.6 862.0 L430.1 845.6 L467.1 832.6" fill="none" stroke="#c8675c" stroke-width="1.2" stroke-linecap="butt" stroke-linejoin="round" stroke-dasharray="3 2.5" />
<path d="M393.1 760.8 L403.9 766.2" fill="none" stroke="#c8675c" stroke-width="1.2" stroke-linecap="butt" stroke-linejoin="round" stroke-dasharray="3 2.5" />
<path d="M380.0 752.1 C386.2 754.9 402.5 763.2 417.0 769.0 C431.5 774.8 455.1 782.5 467.1 786.9 C479.1 791.3 483.7 792.3 488.8 795.6 C493.9 798.9 496.9 803.2 497.5 806.5 C498.1 809.8 499.7 812.7 492.1 815.6 C484.5 818.5 465.1 821.4 451.8 823.9 C438.6 826.4 419.1 829.3 412.6 830.4" fill="none" stroke="#2b35c0" stroke-width="1.3" stroke-linecap="butt" stroke-dasharray="3.5 3" />
<path d="M488.8 830.4 C493.1 828.4 507.6 821.1 514.9 818.4 C522.1 815.7 523.6 813.8 532.3 814.1 C541.0 814.4 558.5 818.0 567.2 820.0 C575.9 822.0 581.7 825.0 584.6 826.0" fill="none" stroke="#2b35c0" stroke-width="1.3" stroke-linecap="butt" stroke-dasharray="3.5 3" />
<path d="M532.3 780.3 C533.4 778.9 536.7 773.2 538.9 772.1 C541.1 771.0 543.2 771.5 545.4 773.8 C547.6 776.1 545.0 781.7 551.9 785.8 C558.8 789.9 580.9 796.1 586.7 798.2" fill="none" stroke="#2b35c0" stroke-width="1.3" stroke-linecap="butt" stroke-dasharray="3.5 3" />
<path d="M475.8 793.4 L493.2 815.2 L493.2 834.7 L484.5 862.0" fill="none" stroke="#8fb0b8" stroke-width="1.2" stroke-linecap="butt" stroke-linejoin="round" stroke-dasharray="3 2.5" />
<g transform="translate(522.5 743) scale(1.0)" fill="#5a3305"><path d="M0 4.600L8.500 0l8.500 4.600v1.700H0z"/><path d="M2.300 7.200h2.300v6.200H2.300zM7.300 7.200h2.300v6.200H7.300zM12.300 7.200h2.300v6.200h-2.300z"/><path d="M0 14.200h17v2H0z"/></g>
<path d="M593.3 801.0 L603.1 769.5 L624.8 732.5 L655.3 711.8 L677.1 702.0 L694.9 700.9 L690.1 711.8 L677.1 727.0 L659.6 724.8 L625.9 793.4 L636.8 801.0 L633.5 810.4 L596.5 802.5Z" fill="#8ba079" />
<path d="M718.4 685.7 L745.0 674.8 L742.3 693.3 L734.7 707.9 L720.6 703.1Z" fill="#8ba079" />
<path d="M659.6 725.9 L681.4 732.9 L694.9 705.3 L711.2 710.0 L663.3 811.2 L625.9 794.9Z" fill="#948d89" stroke="#857d78" stroke-width="0.7" />
<path d="M665.1 748.8 L674.2 752.1 L655.7 787.3 L647.0 783.6Z" fill="#a59593" stroke="#857d78" stroke-width="0.5" />
<path d="M726.0 717.9 L805.9 751.0 L752.6 850.9 L679.2 813.6Z" fill="#948d89" stroke="#857d78" stroke-width="0.7" />
<path d="M603.1 677.0 L641.6 693.3 L631.3 717.2 L594.4 701.3Z" fill="#948d89" stroke="#857d78" stroke-width="0.7" />
<path d="M655.3 672.6 L692.7 672.6 L688.4 693.3 L660.1 700.3Z" fill="#948d89" stroke="#857d78" stroke-width="0.7" />
<path d="M605.2 672.6 L637.9 672.6 L636.8 685.7 L607.4 674.8Z" fill="#948d89" stroke="#857d78" stroke-width="0.7" />
<path d="M761.9 672.6 L814.2 672.6 L814.2 688.9 L791.3 709.6 L764.1 695.9 L775.0 673.7Z" fill="#948d89" stroke="#857d78" stroke-width="0.7" />
<path d="M800.0 704.2 L814.2 709.6 L814.2 737.9 L791.3 728.5Z" fill="#948d89" stroke="#857d78" stroke-width="0.7" />
<path d="M779.3 826.0 L814.2 841.3 L814.2 862.0 L764.1 862.0Z" fill="#948d89" stroke="#857d78" stroke-width="0.7" />
<path d="M718.8 708.5 L694.9 754.2 L665.1 815.6" fill="none" stroke="#b3b3b3" stroke-width="3" stroke-linecap="butt" stroke-linejoin="round" />
<path d="M711.9 711.8 L698.8 739.0" fill="none" stroke="#b3b3b3" stroke-width="1.6" stroke-linecap="butt" stroke-linejoin="round" />
<path d="M692.3 671.5 C692.9 675.9 692.2 692.0 696.2 697.6 C700.2 703.2 708.5 703.6 716.2 705.3 C723.9 707.0 735.8 705.4 742.3 707.9 C748.8 710.4 743.8 714.9 755.4 720.5 C767.0 726.1 802.6 738.1 812.0 741.6" fill="none" stroke="#b3b3b3" stroke-width="3.4" stroke-linecap="butt" />
<path d="M750.0 672.6 L746.7 697.6 L742.3 707.9" fill="none" stroke="#b3b3b3" stroke-width="4" stroke-linecap="butt" stroke-linejoin="round" />
<path d="M603.1 673.7 L632.4 688.9" fill="none" stroke="#b3b3b3" stroke-width="2.5" stroke-linecap="butt" stroke-linejoin="round" />
<path d="M590.0 706.3 L631.3 723.3" fill="none" stroke="#b3b3b3" stroke-width="2.5" stroke-linecap="butt" stroke-linejoin="round" />
<path d="M648.8 672.6 L652.0 710.7" fill="none" stroke="#b3b3b3" stroke-width="2.2" stroke-linecap="butt" stroke-linejoin="round" />
<path d="M665.1 815.6 L754.3 856.5" fill="none" stroke="#b3b3b3" stroke-width="2.8" stroke-linecap="butt" stroke-linejoin="round" />
<path d="M807.6 747.7 L775.0 821.7 L757.6 862.0" fill="none" stroke="#b3b3b3" stroke-width="4" stroke-linecap="butt" stroke-linejoin="round" />
<path d="M724.9 714.0 L806.5 748.8" fill="none" stroke="#c8675c" stroke-width="1.4" stroke-linecap="butt" stroke-linejoin="round" stroke-dasharray="3 2.5" />
<path d="M723.2 714.6 L701.0 754.2 L707.5 755.3" fill="none" stroke="#c8675c" stroke-width="1.4" stroke-linecap="butt" stroke-linejoin="round" stroke-dasharray="3 2.5" />
<path d="M657.9 715.1 L678.1 723.8 L694.0 702.0" fill="none" stroke="#c8675c" stroke-width="1.4" stroke-linecap="butt" stroke-linejoin="round" stroke-dasharray="3 2.5" />
<path d="M745.6 673.7 L742.3 693.3 L735.4 707.4" fill="none" stroke="#c8675c" stroke-width="1.4" stroke-linecap="butt" stroke-linejoin="round" stroke-dasharray="3 2.5" />
<path d="M800.0 756.4 L764.1 839.1" fill="none" stroke="#c8675c" stroke-width="1.2" stroke-linecap="butt" stroke-linejoin="round" stroke-dasharray="3 2.5" />
<path d="M590.0 856.5 L603.1 858.7" fill="none" stroke="#c8675c" stroke-width="1.2" stroke-linecap="butt" stroke-linejoin="round" stroke-dasharray="3 2.5" />
<path d="M742.3 673.7 C737.2 675.7 723.5 681.2 711.9 685.7 C700.3 690.2 684.0 695.3 672.7 700.9 C661.5 706.5 652.8 713.8 644.4 719.4 C636.0 725.0 629.5 726.6 622.6 734.6 C615.7 742.6 608.4 756.8 603.1 767.3 C597.9 777.8 592.2 791.6 591.1 797.8 C590.0 804.0 589.4 802.1 596.5 804.3 C603.6 806.5 619.4 807.3 633.5 810.8 C647.6 814.2 666.9 820.3 681.4 825.0 C695.9 829.7 708.3 833.5 720.6 839.1 C732.9 844.7 748.5 858.0 755.4 858.7 C762.3 859.4 760.8 846.0 761.9 843.5" fill="none" stroke="#2b35c0" stroke-width="1.3" stroke-linecap="butt" stroke-dasharray="3.5 3" />
<path d="M627.0 732.5 C623.7 736.5 613.2 746.2 607.4 756.4 C601.6 766.5 595.1 779.6 592.2 793.4 C589.3 807.2 591.5 827.7 590.0 839.1 C588.5 850.5 584.6 858.2 583.5 862.0" fill="none" stroke="#2b35c0" stroke-width="1.3" stroke-linecap="butt" stroke-dasharray="3.5 3" />
<path d="M624.8 730.3 L600.9 767.3 L590.0 795.6" fill="none" stroke="#5b5b5b" stroke-width="1" stroke-linecap="butt" stroke-linejoin="round" />
<path d="M611.8 838.0 L661.8 851.1 L677.1 862.0 L598.7 862.0 L600.9 850.0Z" fill="#adab90" />
<path d="M603.1 846.1 L661.8 856.9 L659.6 862.0 L600.9 862.0Z" fill="#948d89" stroke="#857d78" stroke-width="0.7" />
<g transform="translate(709.3 715.5) rotate(-62)" stroke="#3e3e3e" fill="#3e3e3e"><path d="M-5.0 0H3.0" stroke-width="1"/><path d="M5.0 0l-4 -2v4z" stroke="none"/></g>
<path d="M810.3 753.1 L884.3 784.3 L853.8 855.4 L779.8 820.6Z" fill="#9797a2" />
<path d="M819.0 762.5 L822.9 764.0 L808.7 795.6 L804.8 793.8Z" fill="#8fa67d" />
<path d="M864.7 806.5 L869.0 808.2 L863.6 820.0 L859.2 818.0Z" fill="#8fa67d" />
<path d="M796.1 809.7 L800.0 811.2 L797.2 818.0 L793.5 816.7Z" fill="#8fa67d" />
<path d="M824.4 826.0 L840.7 833.0 L839.2 836.9 L822.7 829.7Z" fill="#8fa67d" />
<path d="M878.8 672.6 L926.7 672.6 L922.3 680.7 L900.6 685.0 L883.2 678.5Z" fill="#8ba079" />
<path d="M937.6 672.6 L941.1 673.7 L930.2 697.6 L926.7 696.6Z" fill="#86a884" />
<path d="M777.6 672.6 L842.9 672.6 L819.0 709.6 L798.3 699.8 L791.8 711.8 L770.0 703.1 L770.0 685.7Z" fill="#948d89" stroke="#857d78" stroke-width="0.7" />
<path d="M797.2 704.2 L819.0 711.8 L808.1 736.8 L790.7 729.2Z" fill="#948d89" stroke="#857d78" stroke-width="0.7" />
<path d="M854.9 675.9 L874.5 682.4 L845.1 759.0 L824.4 750.3Z" fill="#948d89" stroke="#857d78" stroke-width="0.7" />
<path d="M870.1 691.1 L890.8 698.7 L883.2 716.1 L862.5 708.5Z" fill="#948d89" stroke="#857d78" stroke-width="0.7" />
<path d="M897.3 693.3 L915.4 699.8 L881.4 774.2 L856.0 764.0 L872.3 723.8 L885.3 727.7Z" fill="#948d89" stroke="#857d78" stroke-width="0.7" />
<path d="M883.2 798.8 L941.3 827.1 L929.3 854.3 L872.3 826.5Z" fill="#948d89" stroke="#857d78" stroke-width="0.7" />
<path d="M867.9 826.5 L944.1 856.9 L941.9 868.5 L861.4 848.2Z" fill="#948d89" stroke="#857d78" stroke-width="0.7" />
<path d="M943.0 833.7 L994.2 856.5 L994.2 868.5 L936.5 868.5Z" fill="#948d89" stroke="#857d78" stroke-width="0.7" />
<path d="M778.7 826.0 L853.1 856.9 L851.0 868.5 L770.0 868.5 L770.0 839.1Z" fill="#948d89" stroke="#857d78" stroke-width="0.7" />
<path d="M796.1 856.5 L835.3 868.5 L791.8 868.5Z" fill="#a59593" />
<path d="M866.8 688.5 L859.7 711.1 L872.3 717.2 L852.3 760.8" fill="none" stroke="#9a9aa6" stroke-width="4.5" stroke-linecap="butt" stroke-linejoin="round" />
<path d="M872.3 717.2 L887.5 722.7 L894.5 703.1" fill="none" stroke="#9a9aa6" stroke-width="4.5" stroke-linecap="butt" stroke-linejoin="round" />
<path d="M851.6 672.6 L811.3 752.1 L773.3 839.1" fill="none" stroke="#b2b2b2" stroke-width="6" stroke-linecap="butt" stroke-linejoin="round" />
<path d="M846.2 674.8 L857.1 678.1" fill="none" stroke="#b2b2b2" stroke-width="5" stroke-linecap="butt" stroke-linejoin="round" />
<path d="M770.0 727.0 L811.3 748.8 L885.3 784.3 L891.9 790.8 L1007.2 847.4" fill="none" stroke="#b2b2b2" stroke-width="6.5" stroke-linecap="butt" stroke-linejoin="round" />
<path d="M779.8 820.6 L853.8 855.4 L878.8 868.5" fill="none" stroke="#b2b2b2" stroke-width="4" stroke-linecap="butt" stroke-linejoin="round" />
<path d="M943.0 820.6 L935.4 839.1" fill="none" stroke="#b2b2b2" stroke-width="2.5" stroke-linecap="butt" stroke-linejoin="round" />
<path d="M844.0 856.5 L841.8 868.5" fill="none" stroke="#b2b2b2" stroke-width="2.5" stroke-linecap="butt" stroke-linejoin="round" />
<path d="M857.1 778.2 L820.1 833.0" fill="none" stroke="#c8675c" stroke-width="1.4" stroke-linecap="butt" stroke-linejoin="round" stroke-dasharray="3 2.5" />
<path d="M802.6 803.2 L859.2 830.8" fill="none" stroke="#c8675c" stroke-width="1.4" stroke-linecap="butt" stroke-linejoin="round" stroke-dasharray="3 2.5" />
<path d="M884.3 786.9 L853.8 854.8 L883.2 868.5" fill="none" stroke="#c8675c" stroke-width="1.4" stroke-linecap="butt" stroke-linejoin="round" stroke-dasharray="3 2.5" />
<path d="M920.2 700.9 L882.1 780.3" fill="none" stroke="#c8675c" stroke-width="1.4" stroke-linecap="butt" stroke-linejoin="round" stroke-dasharray="3 2.5" />
<path d="M770.0 734.6 L804.8 750.3" fill="none" stroke="#c8675c" stroke-width="1.4" stroke-linecap="butt" stroke-linejoin="round" stroke-dasharray="3 2.5" />
<path d="M872.3 680.2 L883.2 678.1 L902.8 688.9 L922.3 697.6" fill="none" stroke="#c8675c" stroke-width="1.4" stroke-linecap="butt" stroke-linejoin="round" stroke-dasharray="3 2.5" />
<path d="M904.9 673.7 L898.4 686.8" fill="none" stroke="#c8675c" stroke-width="1.4" stroke-linecap="butt" stroke-linejoin="round" stroke-dasharray="3 2.5" />
<path d="M920.2 673.7 L909.3 682.4" fill="none" stroke="#c8675c" stroke-width="1.4" stroke-linecap="butt" stroke-linejoin="round" stroke-dasharray="3 2.5" />
<g transform="translate(891.2 780.8) rotate(100)" stroke="#3e3e3e" fill="#3e3e3e"><path d="M-4.5 0H2.5" stroke-width="1"/><path d="M4.5 0l-4 -2v4z" stroke="none"/></g>
<path d="M951.1 668.8 L1070.8 723.7 L1009.0 843.2 L889.3 788.4Z" fill="#a09a97" stroke="#5d5d5d" stroke-width="0.8" />
<path d="M951.7 671.9 L1067.9 725.2 L1008.2 840.7 L891.9 787.4Z" fill="#a09b97" stroke="#5d5d5d" stroke-width="0.8" />
<path d="M983.0 686.3 L923.3 801.8" fill="none" stroke="#5d5d5d" stroke-width="0.8" stroke-linecap="butt" stroke-linejoin="round" />
<path d="M974.6 713.9 L932.1 795.9" fill="none" stroke="#5f5f5f" stroke-width="1.5" stroke-linecap="butt" stroke-linejoin="round" />
<path d="M978.5 715.7 L935.9 798.1" fill="none" stroke="#5f5f5f" stroke-width="0.9" stroke-linecap="butt" stroke-linejoin="round" />
<path d="M982.5 717.5 L939.6 800.4" fill="none" stroke="#5f5f5f" stroke-width="1.5" stroke-linecap="butt" stroke-linejoin="round" />
<path d="M986.4 719.3 L943.3 802.7" fill="none" stroke="#5f5f5f" stroke-width="0.9" stroke-linecap="butt" stroke-linejoin="round" />
<path d="M990.4 721.1 L947.0 805.0" fill="none" stroke="#5f5f5f" stroke-width="1.5" stroke-linecap="butt" stroke-linejoin="round" />
<path d="M994.3 722.9 L950.7 807.2" fill="none" stroke="#5f5f5f" stroke-width="0.9" stroke-linecap="butt" stroke-linejoin="round" />
<path d="M998.3 724.7 L954.4 809.5" fill="none" stroke="#5f5f5f" stroke-width="1.5" stroke-linecap="butt" stroke-linejoin="round" />
<path d="M1002.2 726.5 L958.1 811.8" fill="none" stroke="#5f5f5f" stroke-width="0.9" stroke-linecap="butt" stroke-linejoin="round" />
<path d="M1006.2 728.4 L961.8 814.1" fill="none" stroke="#5f5f5f" stroke-width="1.5" stroke-linecap="butt" stroke-linejoin="round" />
<path d="M1010.1 730.2 L965.6 816.3" fill="none" stroke="#5f5f5f" stroke-width="0.9" stroke-linecap="butt" stroke-linejoin="round" />
<path d="M1014.1 732.0 L969.3 818.6" fill="none" stroke="#5f5f5f" stroke-width="1.5" stroke-linecap="butt" stroke-linejoin="round" />
<path d="M1018.0 733.8 L973.0 820.9" fill="none" stroke="#5f5f5f" stroke-width="0.9" stroke-linecap="butt" stroke-linejoin="round" />
<path d="M1022.0 735.6 L976.7 823.1" fill="none" stroke="#5f5f5f" stroke-width="1.5" stroke-linecap="butt" stroke-linejoin="round" />
<path d="M973.4 713.3 L1024.5 736.8" fill="none" stroke="#5f5f5f" stroke-width="0.9" stroke-linecap="butt" stroke-linejoin="round" />
<path d="M955.5 748.0 L1006.6 771.4" fill="none" stroke="#5f5f5f" stroke-width="0.9" stroke-linecap="butt" stroke-linejoin="round" />
<path d="M1036.4 717.9 L980.3 826.5" fill="none" stroke="#555" stroke-width="2.6" stroke-linecap="butt" stroke-linejoin="round" />
<path d="M1026.7 749.2 L986.7 826.6" fill="none" stroke="#5f5f5f" stroke-width="1" stroke-linecap="butt" stroke-linejoin="round" />
<path d="M1030.8 751.1 L990.8 828.5" fill="none" stroke="#5f5f5f" stroke-width="1" stroke-linecap="butt" stroke-linejoin="round" />
<path d="M1034.9 752.9 L994.8 830.3" fill="none" stroke="#5f5f5f" stroke-width="1" stroke-linecap="butt" stroke-linejoin="round" />
<path d="M1038.9 754.8 L998.9 832.2" fill="none" stroke="#5f5f5f" stroke-width="1" stroke-linecap="butt" stroke-linejoin="round" />
<path d="M1024.4 748.1 L1041.8 756.1" fill="none" stroke="#5f5f5f" stroke-width="0.9" stroke-linecap="butt" stroke-linejoin="round" />
<path d="M985.3 690.2 L1031.8 711.5 L1022.9 728.9 L976.4 707.6Z" fill="none" stroke="#5d5d5d" stroke-width="0.8" />
<path d="M992.1 688.3 L1010.7 696.8 L1007.4 703.2 L988.8 694.7Z" fill="#9c9693" stroke="#5d5d5d" stroke-width="0.8" />
<path d="M934.3 711.1 L961.0 723.4" fill="none" stroke="#8a8a8a" stroke-width="1.2" stroke-linecap="butt" stroke-linejoin="round" stroke-dasharray="1.2 4" />
<path d="M912.2 753.9 L938.9 766.1" fill="none" stroke="#8a8a8a" stroke-width="1.2" stroke-linecap="butt" stroke-linejoin="round" stroke-dasharray="1.2 4" />
<circle cx="1023.5" cy="722.0" r="1.6" fill="#555"/>
<circle cx="998.3" cy="787.6" r="1.6" fill="#555"/>
<rect x="1030.1" y="799.4" width="6" height="6" fill="#7a7a7a" transform="rotate(25 1030.1 799.4)"/>
<rect x="1023.8" y="813.1" width="6" height="6" fill="#7a7a7a" transform="rotate(25 1023.8 813.1)"/>
<rect x="1017.6" y="824.3" width="6" height="6" fill="#7a7a7a" transform="rotate(25 1017.6 824.3)"/>
<path d="M1022.4 681.3 L1054.0 692.2 L1055.1 697.6 L1093.2 708.5 L1088.8 724.2 L1049.6 711.8 L1018.1 697.6Z" fill="#948d89" stroke="#857d78" stroke-width="0.7" />
<path d="M1093.2 703.1 L1111.0 709.0 L1077.3 798.2 L1056.2 790.6 L1088.8 724.2Z" fill="#948d89" stroke="#857d78" stroke-width="0.7" />
<path d="M1035.5 801.0 L1062.0 810.2 L1034.4 859.1 L1018.1 846.1Z" fill="#948d89" stroke="#857d78" stroke-width="0.7" />
<path d="M1097.5 673.7 L1119.3 678.1 L1114.9 688.9 L1093.2 684.6Z" fill="#948d89" stroke="#857d78" stroke-width="0.7" />
<path d="M1107.3 717.2 L1088.8 758.6" fill="none" stroke="#a9a9a9" stroke-width="2.5" stroke-linecap="butt" stroke-linejoin="round" />
<path d="M1045.3 793.4 L1030.1 797.8 L1012.6 839.1" fill="none" stroke="#b2b2b2" stroke-width="2.5" stroke-linecap="butt" stroke-linejoin="round" />
<path d="M1045.3 793.4 L1064.9 802.1" fill="none" stroke="#b2b2b2" stroke-width="2.5" stroke-linecap="butt" stroke-linejoin="round" />
<path d="M1101.9 708.5 L1132.3 711.8 L1162.8 672.6 L1204.2 672.6 L1204.2 722.0 L1175.9 722.0 L1145.4 735.7 L1135.6 722.0Z" fill="#b4b4b4" />
<path d="M1073.6 688.9 L1110.6 706.3 L1136.7 697.6 L1132.3 730.3 L1119.3 756.4 L1108.4 736.8 L1110.6 719.4 L1067.1 699.8Z" fill="#b4b4b4" />
<path d="M1160.6 736.8 L1171.5 732.5 L1182.4 747.7 L1170.4 754.2Z" fill="#948d89" stroke="#857d78" stroke-width="0.7" />
<path d="M1145.4 752.1 L1160.6 760.8 L1154.1 773.8 L1140.0 766.2Z" fill="#948d89" stroke="#857d78" stroke-width="0.7" />
<path d="M1136.7 773.8 L1154.1 782.5 L1147.6 795.6 L1130.2 786.9Z" fill="#948d89" stroke="#857d78" stroke-width="0.7" />
<path d="M1175.9 752.1 L1186.7 758.6 L1180.2 771.6 L1169.3 765.1Z" fill="#948d89" stroke="#857d78" stroke-width="0.7" />
<path d="M1149.7 791.2 L1167.2 799.9 L1158.5 817.3 L1142.1 808.6Z" fill="#948d89" stroke="#857d78" stroke-width="0.7" />
<path d="M1119.3 804.3 L1136.7 813.0 L1130.2 826.0 L1110.6 817.3Z" fill="#948d89" stroke="#857d78" stroke-width="0.7" />
<path d="M1101.9 795.6 L1119.3 804.3 L1112.8 815.2 L1097.5 807.5Z" fill="#948d89" stroke="#857d78" stroke-width="0.7" />
<path d="M1132.3 830.4 L1151.9 839.1 L1145.4 854.3 L1125.8 845.6Z" fill="#948d89" stroke="#857d78" stroke-width="0.7" />
<path d="M1171.5 767.3 L1182.4 773.8 L1177.0 786.9 L1166.1 780.3Z" fill="#948d89" stroke="#857d78" stroke-width="0.7" />
<path d="M1101.9 843.5 L1119.3 852.2 L1114.9 865.0 L1095.3 856.5Z" fill="#948d89" stroke="#857d78" stroke-width="0.7" />
<path d="M1195.5 723.8 L1204.2 728.1 L1204.2 736.8 L1192.2 731.4Z" fill="#948d89" stroke="#857d78" stroke-width="0.7" />
<path d="M1204.2 760.8 L1194.4 767.3 L1171.5 826.5 L1204.2 839.1Z" fill="#88a98c" />
<path d="M1171.5 815.2 L1204.2 833.7 L1204.2 868.5 L1151.9 850.4Z" fill="#adab90" />
<path d="M1169.3 836.9 L1188.9 845.6 L1182.4 860.9 L1162.8 852.2Z" fill="#948d89" stroke="#857d78" stroke-width="0.7" />
<path d="M1186.7 850.0 L1204.2 856.5 L1204.2 868.5 L1182.4 868.5Z" fill="#948d89" stroke="#857d78" stroke-width="0.7" />
<path d="M1160.6 728.1 L1175.9 756.4 L1154.1 804.3 L1136.7 797.8" fill="none" stroke="#b2b2b2" stroke-width="2.4" stroke-linecap="butt" stroke-linejoin="round" />
<path d="M1160.6 752.1 L1173.7 758.6" fill="none" stroke="#b2b2b2" stroke-width="2.4" stroke-linecap="butt" stroke-linejoin="round" />
<path d="M1145.4 778.2 L1119.3 795.6 L1108.4 826.0" fill="none" stroke="#b2b2b2" stroke-width="2.4" stroke-linecap="butt" stroke-linejoin="round" />
<path d="M1119.3 795.6 L1141.0 806.5 L1143.2 821.7" fill="none" stroke="#b2b2b2" stroke-width="2.4" stroke-linecap="butt" stroke-linejoin="round" />
<path d="M1084.5 821.7 L1149.7 834.7 L1154.1 850.0 L1145.4 868.5" fill="none" stroke="#b2b2b2" stroke-width="2.4" stroke-linecap="butt" stroke-linejoin="round" />
<path d="M1194.4 760.8 L1167.2 817.3" fill="none" stroke="#b2b2b2" stroke-width="2.4" stroke-linecap="butt" stroke-linejoin="round" />
<path d="M1154.1 736.8 L1188.9 730.3" fill="none" stroke="#c8675c" stroke-width="1.4" stroke-linecap="butt" stroke-linejoin="round" stroke-dasharray="3 2.5" />
<path d="M1171.5 760.8 L1184.6 767.3" fill="none" stroke="#c8675c" stroke-width="1.4" stroke-linecap="butt" stroke-linejoin="round" stroke-dasharray="3 2.5" />
<path d="M1162.8 786.9 L1171.5 791.2" fill="none" stroke="#c8675c" stroke-width="1.4" stroke-linecap="butt" stroke-linejoin="round" stroke-dasharray="3 2.5" />
<path d="M1132.3 826.0 L1151.9 834.7" fill="none" stroke="#c8675c" stroke-width="1.4" stroke-linecap="butt" stroke-linejoin="round" stroke-dasharray="3 2.5" />
<path d="M1088.8 850.0 L1101.9 854.3 L1110.6 868.5" fill="none" stroke="#c8675c" stroke-width="1.4" stroke-linecap="butt" stroke-linejoin="round" stroke-dasharray="3 2.5" />
<path d="M1177.0 721.6 L1204.2 747.7" fill="none" stroke="#c8675c" stroke-width="1.4" stroke-linecap="butt" stroke-linejoin="round" stroke-dasharray="3 2.5" />
<path d="M1184.6 684.6 L1204.2 678.1" fill="none" stroke="#c8675c" stroke-width="1.4" stroke-linecap="butt" stroke-linejoin="round" stroke-dasharray="3 2.5" />
<path d="M1003.9 672.6 L998.5 685.0" fill="none" stroke="#1878b0" stroke-width="1.4" stroke-linecap="butt" stroke-linejoin="round" stroke-dasharray="3 2.5" />
<path d="M1013.7 673.7 L1008.3 689.4" fill="none" stroke="#1878b0" stroke-width="1.4" stroke-linecap="butt" stroke-linejoin="round" stroke-dasharray="3 2.5" />
<path d="M1021.3 673.7 L1013.7 690.7" fill="none" stroke="#c77b30" stroke-width="1.4" stroke-linecap="butt" stroke-linejoin="round" stroke-dasharray="3 2.5" />
<path d="M1035.5 673.7 L1074.7 687.9" fill="none" stroke="#c77b30" stroke-width="1.4" stroke-linecap="butt" stroke-linejoin="round" stroke-dasharray="3 2.5" />
<path d="M1062.7 689.4 L1110.6 707.9" fill="none" stroke="#2b35c0" stroke-width="1" stroke-linecap="butt" stroke-linejoin="round" stroke-dasharray="3 2.5" />
<rect x="1054.0" y="672.0" width="17" height="12" rx="1.5" fill="#b7a58a" stroke="#8d7b5f" stroke-width=".7"/>
<path d="M1225 660 L1241.4 672.6 L1271.9 691.1 L1315.4 721.6 L1370 752 L1403.5 778.2 L1425.3 802 L1451.4 821.7 L1481.9 847.8 L1499.3 862 L1510 872 L1585 875 L1569 862 L1532 826 L1490.6 793.4 L1451.4 760.8 L1403.5 728 L1370 697.6 L1324 672.6 L1305 660Z" fill="#749099" />
<path d="M1270 670 L1330 705 L1400 755 L1470 812 L1530 866" fill="none" stroke="#6f7fa0" stroke-width="0.9" stroke-linecap="butt" stroke-linejoin="round" stroke-dasharray="3 5" />
<path d="M1497.1 756.4 L1513.4 760.8 L1577.6 818.4 L1577.6 867.4 L1557.0 867.4 L1529.7 822.1 L1492.8 787.3Z" fill="#93af99" />
<path d="M1512.3 789.5 L1521.5 782.5 L1534.5 793.8 L1526.5 802.5Z" fill="#749099" />
<circle cx="1503.6" cy="781.4" r="3" fill="#749099"/>
<path d="M1455.8 737.9 L1468.8 736.4 L1471.4 741.2 L1462.3 769.9 L1451.4 763.4Z" fill="#86a070" />
<path d="M1481.9 697.6 L1503.6 697.6 L1499.3 728.5 L1481.9 769.9 L1468.8 773.8 L1473.2 730.3Z" fill="#a0969f" />
<path d="M1431.8 804.3 L1451.4 821.7 L1438.3 839.1 L1425.3 826.0Z" fill="#a0969f" />
<path d="M1300.2 760.8 L1324.1 769.5 L1311.0 789.0 L1291.5 779.3Z" fill="#a0969f" />
<path d="M1341.5 817.3 L1370.0 830.4 L1370.0 865.0 L1345.9 865.0 L1328.5 839.1Z" fill="#a0969f" />
<path d="M1360.0 821.7 L1388.3 839.1 L1425.3 845.6 L1429.6 862.0 L1360.0 862.0Z" fill="#a0969f" />
<path d="M1263.2 687.9 L1271.9 691.1 L1268.6 699.8 L1259.9 695.5Z" fill="#a79593" />
<path d="M1317.6 715.1 L1330.6 722.7 L1324.1 732.5 L1313.2 725.9Z" fill="#a79593" />
<path d="M1163.1 715.1 C1165.6 714.2 1171.4 711.2 1178.3 709.6 C1185.2 708.0 1194.6 705.5 1204.4 705.3 C1214.2 705.1 1225.8 706.1 1237.1 708.5 C1248.3 710.9 1261.0 715.0 1271.9 719.8 C1282.8 724.6 1291.8 730.3 1302.3 737.3 C1312.8 744.3 1323.7 753.3 1335.0 761.8 C1346.3 770.2 1360.4 780.9 1370.0 788.0 C1379.6 795.1 1383.4 797.2 1392.6 804.3 C1401.8 811.4 1415.5 822.1 1425.3 830.4 C1435.1 838.7 1445.2 848.1 1451.4 854.3 C1457.6 860.5 1460.5 865.2 1462.3 867.4" fill="none" stroke="#b4b4b4" stroke-width="11" stroke-linecap="butt" />
<path d="M1154.4 736.8 C1157.3 734.4 1163.5 726.4 1171.8 722.7 C1180.1 719.0 1193.5 715.5 1204.4 714.6 C1215.3 713.7 1224.4 714.5 1237.1 717.2 C1249.8 719.9 1269.0 725.1 1280.6 730.7 C1292.2 736.3 1302.3 747.6 1306.7 751.0" fill="none" stroke="#b4b4b4" stroke-width="6.5" stroke-linecap="butt" />
<path d="M1178.3 672.6 L1221.8 672.6 L1215.3 691.1 L1197.9 708.5 L1171.8 721.6 L1150.0 736.8 L1150.0 710.7 L1165.2 695.5Z" fill="#b4b4b4" />
<path d="M1225.1 673.7 L1219.6 688.9" fill="none" stroke="#b2b2b2" stroke-width="3" stroke-linecap="butt" stroke-linejoin="round" />
<path d="M1360.0 678.1 L1414.4 702.4 L1462.3 728.5 L1499.3 741.6 L1534.1 763.4 L1577.6 806.5" fill="none" stroke="#b4b4b4" stroke-width="8" stroke-linecap="butt" stroke-linejoin="round" />
<path d="M1403.5 672.6 L1473.2 706.8" fill="none" stroke="#b4b4b4" stroke-width="6" stroke-linecap="butt" stroke-linejoin="round" />
<path d="M1540.6 683.5 C1542.1 685.9 1543.6 692.2 1549.8 697.6 C1556.0 703.0 1573.0 713.0 1577.6 716.1" fill="none" stroke="#b4b4b4" stroke-width="5" stroke-linecap="butt" />
<path d="M1491.7 662.8 L1462.7 730.3" fill="none" stroke="#b4b4b4" stroke-width="5" stroke-linecap="butt" stroke-linejoin="round" />
<path d="M1303.4 752.1 L1273.0 804.3 L1263.2 815.2" fill="none" stroke="#b4b4b4" stroke-width="5" stroke-linecap="butt" stroke-linejoin="round" />
<path d="M1278.4 792.3 L1271.9 803.2" fill="none" stroke="#7d7d7d" stroke-width="5" stroke-linecap="butt" stroke-linejoin="round" />
<path d="M1289.3 789.0 L1370.0 850.4" fill="none" stroke="#b2b2b2" stroke-width="2.6" stroke-linecap="butt" stroke-linejoin="round" />
<path d="M1311.0 797.8 L1335.0 817.3" fill="none" stroke="#b2b2b2" stroke-width="3.5" stroke-linecap="butt" stroke-linejoin="round" />
<path d="M1194.6 758.6 L1165.2 815.2" fill="none" stroke="#b2b2b2" stroke-width="3" stroke-linecap="butt" stroke-linejoin="round" />
<path d="M1150.0 752.1 L1163.1 749.9 L1173.9 758.6 L1163.1 778.2 L1150.0 773.8" fill="none" stroke="#b2b2b2" stroke-width="2.6" stroke-linecap="butt" stroke-linejoin="round" />
<path d="M1252.3 823.9 L1232.7 852.2 L1226.2 867.4" fill="none" stroke="#b2b2b2" stroke-width="2.6" stroke-linecap="butt" stroke-linejoin="round" />
<path d="M1168.5 724.8 L1192.4 746.6 L1214.2 770.5 L1244.7 805.4 L1267.5 830.4 L1302.3 867.4" fill="none" stroke="#b0b0b0" stroke-width="6" stroke-linecap="butt" stroke-linejoin="round" />
<path d="M1215.3 768.4 L1245.8 803.2 L1265.3 827.1" fill="none" stroke="#555" stroke-width="2.6" stroke-linecap="butt" stroke-linejoin="round" stroke-dasharray="9 3" />
<path d="M1449.2 760.8 L1429.6 821.7" fill="none" stroke="#6a6a6a" stroke-width="3.6" stroke-linecap="butt" stroke-linejoin="round" />
<path d="M1449.2 760.8 L1429.6 821.7" fill="none" stroke="#aab" stroke-width="2.2" stroke-linecap="butt" stroke-linejoin="round" />
<path d="M1194.6 767.3 L1207.0 778.2 L1239.7 811.2 L1215.3 845.2 L1170.7 815.6Z" fill="#88a98c" />
<path d="M1170.7 815.6 L1215.3 845.2 L1233.8 848.2 L1226.2 868.5 L1150.0 868.5 L1150.0 839.1Z" fill="#adab90" />
<path d="M1237.1 854.8 L1252.7 852.2 L1264.3 868.5 L1232.7 868.5Z" fill="#6fa58b" />
<path d="M1219.6 815.2 L1243.6 817.3 L1246.8 826.0 L1232.7 847.8 L1215.3 845.2Z" fill="#a39d9b" />
<path d="M1195.7 728.1 L1202.2 722.2 L1221.8 722.2 L1263.2 730.3 L1296.2 750.3 L1287.5 767.7 L1256.6 802.5 L1237.1 787.3Z" fill="#97908b" stroke="#8d7f6a" stroke-width="0.8" />
<path d="M1258.8 741.2 L1269.7 733.6 L1298.4 761.2 L1288.6 772.1Z" fill="none" stroke="#b4b4b4" stroke-width="2.4" />
<path d="M1224.0 680.2 L1254.9 689.4 L1249.5 700.3 L1219.6 691.1Z" fill="#948d89" stroke="#857d78" stroke-width="0.7" />
<path d="M1188.1 673.7 L1213.1 673.7 L1208.8 684.6 L1189.2 680.2Z" fill="#948d89" stroke="#857d78" stroke-width="0.7" />
<path d="M1271.9 693.3 L1318.0 717.7 L1312.1 728.5 L1265.3 704.6Z" fill="#948d89" stroke="#857d78" stroke-width="0.7" />
<path d="M1335.0 732.5 L1374.2 754.2 L1374.2 769.5 L1328.5 743.8Z" fill="#948d89" stroke="#857d78" stroke-width="0.7" />
<path d="M1254.5 680.2 L1263.2 683.5 L1259.9 693.3 L1251.2 690.0Z" fill="#948d89" stroke="#857d78" stroke-width="0.7" />
<path d="M1158.7 734.6 L1173.9 743.3 L1165.2 758.6 L1152.2 752.1Z" fill="#948d89" stroke="#857d78" stroke-width="0.7" />
<path d="M1173.9 752.1 L1184.8 760.8 L1178.3 771.6 L1169.6 765.1Z" fill="#948d89" stroke="#857d78" stroke-width="0.7" />
<path d="M1150.0 786.9 L1167.4 795.6 L1158.7 817.3 L1150.0 815.2Z" fill="#948d89" stroke="#857d78" stroke-width="0.7" />
<path d="M1170.7 769.5 L1182.6 773.8 L1173.9 793.4 L1163.1 788.0Z" fill="#948d89" stroke="#857d78" stroke-width="0.7" />
<path d="M1150.0 760.8 L1160.9 765.1 L1155.4 778.2 L1150.0 776.0Z" fill="#948d89" stroke="#857d78" stroke-width="0.7" />
<path d="M1169.6 836.9 L1189.6 846.1 L1180.9 866.3 L1159.1 856.9Z" fill="#948d89" stroke="#857d78" stroke-width="0.7" />
<path d="M1190.3 852.6 L1209.2 861.3 L1205.5 868.5 L1184.8 868.5Z" fill="#948d89" stroke="#857d78" stroke-width="0.7" />
<path d="M1150.0 817.3 L1158.7 821.7 L1152.2 836.9 L1150.0 835.8Z" fill="#948d89" stroke="#857d78" stroke-width="0.7" />
<path d="M1321.9 773.8 L1345.9 786.9 L1337.2 804.3 L1313.2 791.2Z" fill="#948d89" stroke="#857d78" stroke-width="0.7" />
<path d="M1341.5 791.2 L1370.0 806.5 L1370.0 821.7 L1335.0 806.5Z" fill="#948d89" stroke="#857d78" stroke-width="0.7" />
<path d="M1302.3 793.4 L1324.1 806.5 L1315.4 821.7 L1293.6 808.6Z" fill="#948d89" stroke="#857d78" stroke-width="0.7" />
<path d="M1280.6 806.5 L1302.3 817.3 L1291.5 836.9 L1271.9 826.0Z" fill="#948d89" stroke="#857d78" stroke-width="0.7" />
<path d="M1300.2 821.7 L1324.1 834.7 L1315.4 850.0 L1291.5 836.9Z" fill="#948d89" stroke="#857d78" stroke-width="0.7" />
<path d="M1328.5 813.0 L1345.9 821.7 L1337.2 839.1 L1319.7 830.4Z" fill="#948d89" stroke="#857d78" stroke-width="0.7" />
<path d="M1315.4 845.6 L1337.2 856.5 L1330.6 868.5 L1306.7 860.9Z" fill="#948d89" stroke="#857d78" stroke-width="0.7" />
<path d="M1280.6 839.1 L1302.3 850.0 L1295.8 867.4 L1271.9 856.5Z" fill="#948d89" stroke="#857d78" stroke-width="0.7" />
<path d="M1254.5 832.6 L1271.9 839.1 L1263.2 856.5 L1245.8 850.0Z" fill="#948d89" stroke="#857d78" stroke-width="0.7" />
<path d="M1345.9 839.1 L1370.0 852.2 L1370.0 868.5 L1337.2 856.5Z" fill="#948d89" stroke="#857d78" stroke-width="0.7" />
<path d="M1360.0 748.8 L1369.8 751.0 L1432.9 801.0 L1423.1 816.7 L1360.0 769.9Z" fill="#948d89" stroke="#857d78" stroke-width="0.7" />
<path d="M1360.0 804.3 L1386.1 821.7 L1375.2 839.1 L1360.0 830.4Z" fill="#948d89" stroke="#857d78" stroke-width="0.7" />
<path d="M1373.1 836.9 L1392.6 847.8 L1386.1 860.9 L1366.5 850.0Z" fill="#948d89" stroke="#857d78" stroke-width="0.7" />
<path d="M1451.4 830.4 L1481.9 852.2 L1475.3 867.4 L1442.7 845.6Z" fill="#948d89" stroke="#857d78" stroke-width="0.7" />
<path d="M1373.1 684.6 L1383.9 688.9 L1380.7 697.6 L1369.8 693.3Z" fill="#948d89" stroke="#857d78" stroke-width="0.7" />
<path d="M1387.2 692.2 L1398.1 696.6 L1394.8 705.3 L1383.9 700.9Z" fill="#948d89" stroke="#857d78" stroke-width="0.7" />
<path d="M1401.3 699.8 L1412.2 704.2 L1409.0 712.9 L1398.1 708.5Z" fill="#948d89" stroke="#857d78" stroke-width="0.7" />
<path d="M1415.5 707.4 L1426.4 711.8 L1423.1 720.5 L1412.2 716.1Z" fill="#948d89" stroke="#857d78" stroke-width="0.7" />
<path d="M1429.6 714.0 L1439.4 718.3 L1436.2 727.0 L1426.4 722.7Z" fill="#948d89" stroke="#857d78" stroke-width="0.7" />
<path d="M1442.7 723.8 L1453.6 728.1 L1449.2 736.8 L1439.4 732.5Z" fill="#948d89" stroke="#857d78" stroke-width="0.7" />
<path d="M1435.1 734.6 L1455.8 743.3 L1449.2 752.1 L1431.8 743.3Z" fill="#948d89" stroke="#857d78" stroke-width="0.7" />
<path d="M1442.7 673.7 L1455.8 678.1 L1451.4 688.9 L1438.3 684.6Z" fill="#948d89" stroke="#857d78" stroke-width="0.7" />
<path d="M1460.1 684.6 L1473.2 688.9 L1468.8 699.8 L1455.8 695.5Z" fill="#948d89" stroke="#857d78" stroke-width="0.7" />
<path d="M1447.1 699.8 L1462.3 706.3 L1457.9 717.2 L1442.7 710.7Z" fill="#948d89" stroke="#857d78" stroke-width="0.7" />
<path d="M1468.8 671.5 L1486.2 671.5 L1481.9 684.6 L1466.6 680.2Z" fill="#948d89" stroke="#857d78" stroke-width="0.7" />
<path d="M1525.4 667.2 L1540.6 667.2 L1534.1 680.2 L1523.2 678.1Z" fill="#948d89" stroke="#857d78" stroke-width="0.7" />
<path d="M1510.2 685.7 L1516.7 686.8 L1515.6 692.2 L1510.2 691.1Z" fill="#948d89" stroke="#857d78" stroke-width="0.7" />
<path d="M1508.0 728.1 L1534.1 708.5 L1547.2 699.8 L1555.9 706.3 L1525.4 739.0 L1516.7 739.0Z" fill="#948d89" stroke="#857d78" stroke-width="0.7" />
<path d="M1529.7 745.5 L1562.4 717.2 L1568.9 723.8 L1538.5 756.4Z" fill="#948d89" stroke="#857d78" stroke-width="0.7" />
<path d="M1549.3 767.3 L1568.9 745.5 L1577.6 752.1 L1558.0 773.8Z" fill="#948d89" stroke="#857d78" stroke-width="0.7" />
<path d="M1562.4 688.9 L1575.5 693.3 L1571.1 704.2 L1558.0 699.8Z" fill="#948d89" stroke="#857d78" stroke-width="0.7" />
<path d="M1499.3 758.6 L1512.3 762.9 L1516.7 769.5 L1508.0 773.8 L1497.1 765.1Z" fill="#948d89" stroke="#857d78" stroke-width="0.7" />
<path d="M1555.9 670.4 L1566.7 672.6 L1562.4 682.4 L1552.6 679.1Z" fill="#948d89" stroke="#857d78" stroke-width="0.7" />
<path d="M1173.9 722.0 L1241.4 796.7 L1271.9 827.1 L1302.3 858.7" fill="none" stroke="#c8675c" stroke-width="1.4" stroke-linecap="butt" stroke-linejoin="round" stroke-dasharray="3 2.5" />
<path d="M1188.1 724.8 L1221.8 762.9 L1252.3 797.8 L1280.6 827.1 L1311.0 860.9" fill="none" stroke="#c8675c" stroke-width="1.4" stroke-linecap="butt" stroke-linejoin="round" stroke-dasharray="3 2.5" />
<path d="M1302.3 751.0 L1271.9 804.3 L1258.8 804.3" fill="none" stroke="#c8675c" stroke-width="1.4" stroke-linecap="butt" stroke-linejoin="round" stroke-dasharray="3 2.5" />
<path d="M1293.6 747.7 L1265.3 797.8" fill="none" stroke="#c8675c" stroke-width="1.4" stroke-linecap="butt" stroke-linejoin="round" stroke-dasharray="3 2.5" />
<path d="M1163.1 732.5 L1180.5 756.4 L1171.8 767.3" fill="none" stroke="#c8675c" stroke-width="1.4" stroke-linecap="butt" stroke-linejoin="round" stroke-dasharray="3 2.5" />
<path d="M1328.5 672.6 L1370.0 697.6" fill="none" stroke="#c8675c" stroke-width="1.4" stroke-linecap="butt" stroke-linejoin="round" stroke-dasharray="3 2.5" />
<path d="M1360.0 695.5 L1403.5 725.9 L1447.1 757.5 L1490.6 791.2 L1525.4 820.6 L1555.9 856.5" fill="none" stroke="#c8675c" stroke-width="1.4" stroke-linecap="butt" stroke-linejoin="round" stroke-dasharray="3 2.5" />
<path d="M1360.0 678.1 L1392.6 688.9 L1431.8 710.7" fill="none" stroke="#c8675c" stroke-width="1.4" stroke-linecap="butt" stroke-linejoin="round" stroke-dasharray="3 2.5" />
<path d="M1360.0 743.3 L1410.1 782.5" fill="none" stroke="#c8675c" stroke-width="1.4" stroke-linecap="butt" stroke-linejoin="round" stroke-dasharray="3 2.5" />
<path d="M1425.3 804.3 L1431.8 823.9 L1425.3 830.4" fill="none" stroke="#c8675c" stroke-width="1.4" stroke-linecap="butt" stroke-linejoin="round" stroke-dasharray="3 2.5" />
<path d="M1464.5 725.9 L1447.1 760.8" fill="none" stroke="#c8675c" stroke-width="1.4" stroke-linecap="butt" stroke-linejoin="round" stroke-dasharray="3 2.5" />
<path d="M1499.3 728.1 L1512.3 693.3 L1534.1 688.9 L1538.5 699.8 L1516.7 717.2 L1503.6 717.2" fill="none" stroke="#c8675c" stroke-width="1.4" stroke-linecap="butt" stroke-linejoin="round" stroke-dasharray="3 2.5" />
<path d="M1525.4 756.4 L1555.9 728.1 L1568.9 715.1" fill="none" stroke="#c8675c" stroke-width="1.4" stroke-linecap="butt" stroke-linejoin="round" stroke-dasharray="3 2.5" />
<path d="M1547.2 769.5 L1568.9 747.7 L1575.0 739.0" fill="none" stroke="#c8675c" stroke-width="1.4" stroke-linecap="butt" stroke-linejoin="round" stroke-dasharray="3 2.5" />
<path d="M1564.6 786.9 L1575.0 778.2" fill="none" stroke="#c8675c" stroke-width="1.4" stroke-linecap="butt" stroke-linejoin="round" stroke-dasharray="3 2.5" />
<path d="M1494.9 769.5 L1512.3 778.2 L1534.1 804.3 L1551.5 815.2 L1568.9 817.3 L1575.0 830.4" fill="none" stroke="#c8675c" stroke-width="1.4" stroke-linecap="butt" stroke-linejoin="round" stroke-dasharray="3 2.5" />
<path d="M1534.1 804.3 L1525.4 821.7 L1555.9 856.5" fill="none" stroke="#c8675c" stroke-width="1.4" stroke-linecap="butt" stroke-linejoin="round" stroke-dasharray="3 2.5" />
<path d="M1551.5 815.2 L1549.3 843.5 L1575.0 856.5" fill="none" stroke="#c8675c" stroke-width="1.4" stroke-linecap="butt" stroke-linejoin="round" stroke-dasharray="3 2.5" />
<path d="M1481.9 786.9 L1512.3 804.3 L1521.0 817.3" fill="none" stroke="#c8675c" stroke-width="1.4" stroke-linecap="butt" stroke-linejoin="round" stroke-dasharray="3 2.5" />
<path d="M1360.0 782.5 L1386.1 795.6" fill="none" stroke="#c8675c" stroke-width="1.4" stroke-linecap="butt" stroke-linejoin="round" stroke-dasharray="3 2.5" />
<path d="M1377.4 862.0 L1403.5 856.5 L1410.1 850.0" fill="none" stroke="#c8675c" stroke-width="1.4" stroke-linecap="butt" stroke-linejoin="round" stroke-dasharray="3 2.5" />
<path d="M1459.8 546.0 L1471.8 550.3 L1463.1 572.1 L1459.8 571.0Z" fill="#88a98c" />
<path d="M1511.0 490.4 L1537.1 490.4 L1534.9 498.5 L1513.1 495.9Z" fill="#9797a2" />
<path d="M1571.9 490.4 L1577.4 490.4 L1577.4 498.1 L1522.9 685.1 L1515.3 685.1Z" fill="#a0969f" />
<path d="M1544.1 488.3 L1492.7 688.6" fill="none" stroke="#b4b4b4" stroke-width="5" stroke-linecap="butt" stroke-linejoin="round" />
<path d="M1513.6 502.4 L1478.3 556.8 L1456.5 589.5" fill="none" stroke="#b4b4b4" stroke-width="4.5" stroke-linecap="butt" stroke-linejoin="round" />
<path d="M1456.5 622.6 L1503.3 647.9" fill="none" stroke="#b4b4b4" stroke-width="5" stroke-linecap="butt" stroke-linejoin="round" />
<path d="M1466.3 578.6 C1469.0 578.8 1473.5 577.2 1482.7 579.7 C1492.0 582.2 1515.3 591.5 1521.8 593.9" fill="none" stroke="#b9b9b9" stroke-width="1.4" stroke-linecap="butt" />
<path d="M1484.8 554.7 L1509.9 567.7" fill="none" stroke="#a8a8a8" stroke-width="1.2" stroke-linecap="butt" stroke-linejoin="round" />
<path d="M1460.9 493.7 L1504.4 501.3 L1499.0 514.4 L1459.8 506.8Z" fill="#948d89" stroke="#857d78" stroke-width="0.7" />
<path d="M1459.8 517.7 L1478.3 524.2 L1471.8 539.4 L1459.8 535.1Z" fill="#948d89" stroke="#857d78" stroke-width="0.7" />
<path d="M1482.7 513.3 L1496.8 519.8 L1489.2 537.3 L1476.1 530.7Z" fill="#948d89" stroke="#857d78" stroke-width="0.7" />
<path d="M1515.3 505.7 L1531.6 511.1 L1526.2 524.2 L1511.0 517.7Z" fill="#948d89" stroke="#857d78" stroke-width="0.7" />
<path d="M1491.4 542.7 L1529.5 556.8 L1524.0 568.8 L1487.0 554.7Z" fill="#948d89" stroke="#857d78" stroke-width="0.7" />
<path d="M1504.4 524.2 L1517.5 529.6 L1513.1 539.4 L1500.1 534.0Z" fill="#948d89" stroke="#857d78" stroke-width="0.7" />
<path d="M1472.9 568.8 L1482.7 572.1 L1479.4 578.6 L1470.7 575.4Z" fill="#948d89" stroke="#857d78" stroke-width="0.7" />
<path d="M1489.2 567.7 L1504.4 573.2 L1501.2 583.0 L1487.0 577.5Z" fill="#948d89" stroke="#857d78" stroke-width="0.7" />
<path d="M1506.6 577.5 L1520.8 583.0 L1516.4 592.8 L1503.3 587.3Z" fill="#948d89" stroke="#857d78" stroke-width="0.7" />
<path d="M1482.7 585.2 L1496.8 590.6 L1485.9 617.8 L1473.9 612.4Z" fill="#948d89" stroke="#857d78" stroke-width="0.7" />
<path d="M1463.1 580.8 L1476.1 586.2 L1470.7 598.2 L1459.8 593.9Z" fill="#948d89" stroke="#857d78" stroke-width="0.7" />
<path d="M1496.8 606.9 L1508.8 611.3 L1501.2 630.9 L1493.5 626.5 L1496.8 615.6Z" fill="#948d89" stroke="#857d78" stroke-width="0.7" />
<path d="M1468.5 621.1 L1489.2 628.7 L1485.9 637.4 L1465.2 629.8Z" fill="#948d89" stroke="#857d78" stroke-width="0.7" />
<path d="M1456.5 589.5 L1466.3 593.9 L1459.8 606.9 L1456.5 605.8Z" fill="#948d89" stroke="#857d78" stroke-width="0.7" />
<path d="M1463.1 657.0 L1473.9 661.4 L1469.6 672.2 L1459.8 667.9Z" fill="#948d89" stroke="#857d78" stroke-width="0.7" />
<path d="M1473.9 665.7 L1487.0 670.1 L1482.7 682.0 L1470.7 677.7Z" fill="#948d89" stroke="#857d78" stroke-width="0.7" />
<path d="M1456.5 637.4 L1467.4 641.8 L1463.1 652.6 L1456.5 650.5Z" fill="#948d89" stroke="#857d78" stroke-width="0.7" />
<path d="M1562.1 577.5 L1576.3 579.7 L1576.3 587.3 L1563.2 587.3Z" fill="#948d89" stroke="#857d78" stroke-width="0.7" />
<path d="M1553.4 603.7 L1567.6 602.6 L1568.7 612.4 L1554.5 613.5Z" fill="#948d89" stroke="#857d78" stroke-width="0.7" />
<path d="M1543.6 629.8 L1558.9 627.6 L1559.9 637.4 L1545.8 639.6Z" fill="#948d89" stroke="#857d78" stroke-width="0.7" />
<path d="M1528.4 663.5 L1539.3 662.4 L1541.4 678.8 L1530.6 679.9Z" fill="#948d89" stroke="#857d78" stroke-width="0.7" />
<path d="M1552.3 657.0 L1576.3 650.5 L1576.3 681.0 L1558.9 686.4Z" fill="#948d89" stroke="#857d78" stroke-width="0.7" />
<path d="M1548.0 491.5 L1558.9 492.6 L1556.7 500.2 L1546.9 498.1Z" fill="#948d89" stroke="#857d78" stroke-width="0.7" />
<path d="M1563.2 530.7 L1574.1 531.8 L1574.1 539.4 L1564.3 538.3Z" fill="#948d89" stroke="#857d78" stroke-width="0.7" />
<path d="M1516.4 505.0 L1493.5 543.8 L1458.7 603.7" fill="none" stroke="#c8675c" stroke-width="1.4" stroke-linecap="butt" stroke-linejoin="round" stroke-dasharray="3 2.5" />
<path d="M1536.0 513.3 L1526.2 556.8 L1498.3 641.8" fill="none" stroke="#c8675c" stroke-width="1.4" stroke-linecap="butt" stroke-linejoin="round" stroke-dasharray="3 2.5" />
<path d="M1537.1 503.5 L1519.7 504.6" fill="none" stroke="#c8675c" stroke-width="1.4" stroke-linecap="butt" stroke-linejoin="round" stroke-dasharray="3 2.5" />
<path d="M1576.3 560.1 L1569.3 550.3 L1571.9 535.1" fill="none" stroke="#c8675c" stroke-width="1.4" stroke-linecap="butt" stroke-linejoin="round" stroke-dasharray="3 2.5" />
<path d="M1558.9 577.5 L1567.6 572.1 L1576.3 574.3" fill="none" stroke="#c8675c" stroke-width="1.4" stroke-linecap="butt" stroke-linejoin="round" stroke-dasharray="3 2.5" />
<path d="M1563.2 577.5 L1554.5 598.2 L1558.9 602.6 L1576.3 600.4" fill="none" stroke="#c8675c" stroke-width="1.4" stroke-linecap="butt" stroke-linejoin="round" stroke-dasharray="3 2.5" />
<path d="M1552.3 604.7 L1545.8 624.3 L1554.5 626.5 L1571.9 624.3 L1576.3 615.6" fill="none" stroke="#c8675c" stroke-width="1.4" stroke-linecap="butt" stroke-linejoin="round" stroke-dasharray="3 2.5" />
<path d="M1543.6 627.6 L1534.9 651.6 L1541.4 666.8" fill="none" stroke="#c8675c" stroke-width="1.4" stroke-linecap="butt" stroke-linejoin="round" stroke-dasharray="3 2.5" />
<path d="M1458.7 556.8 L1471.8 553.6" fill="none" stroke="#c8675c" stroke-width="1.4" stroke-linecap="butt" stroke-linejoin="round" stroke-dasharray="3 2.5" />
<path d="M1469.6 490.4 L1511.0 500.2" fill="none" stroke="#2b35c0" stroke-width="1.4" stroke-linecap="butt" stroke-linejoin="round" stroke-dasharray="3.5 3" />
<path d="M304.5 671.0 L440.0 671.0 L440.0 748.6 L398.6 729.2 L304.5 687.4Z" fill="#a09da4" />
<path d="M322.5 671.0 L420.3 671.0 L406.8 710.1 L365.0 700.8 L363.1 705.6 L324.0 692.2Z" fill="#948d89" stroke="#857d78" stroke-width="0.7" />
<path d="M340.4 671.0 L369.1 671.0 L360.1 693.7 L341.9 687.7Z" fill="#a59593" stroke="#857d78" stroke-width="0.5" />
<path d="M390.0 687.4 L409.4 693.7 L398.9 720.6 L379.2 711.6Z" fill="#9797a2" />
<path d="M419.8 688.9 L440.0 696.7 L440.0 725.0 L409.4 714.6Z" fill="#948d89" stroke="#857d78" stroke-width="0.7" />
<path d="M309.0 671.0 L319.5 671.0 L316.5 679.9 L308.3 677.7Z" fill="#948d89" stroke="#857d78" stroke-width="0.7" />
<path d="M319.5 674.0 L318.0 684.4" fill="none" stroke="#b0b0b0" stroke-width="3" stroke-linecap="butt" stroke-linejoin="round" />
<path d="M421.0 672.5 L407.6 711.3" fill="none" stroke="#b0b0b0" stroke-width="2.2" stroke-linecap="butt" stroke-linejoin="round" />
<path d="M340.4 688.9 L337.4 699.3" fill="none" stroke="#b0b0b0" stroke-width="1.2" stroke-linecap="butt" stroke-linejoin="round" />
<path d="M326.9 674.0 L321.7 687.4 L326.9 697.1 L349.3 705.3 L379.2 715.8" fill="none" stroke="#c8675c" stroke-width="1.4" stroke-linecap="butt" stroke-linejoin="round" stroke-dasharray="3 2.5" />
<path d="M427.0 672.5 L433.0 679.9 L440.0 682.9" fill="none" stroke="#c8675c" stroke-width="1.4" stroke-linecap="butt" stroke-linejoin="round" stroke-dasharray="3 2.5" />
<path d="M440.0 724.7 L433.0 739.7" fill="none" stroke="#c8675c" stroke-width="1.4" stroke-linecap="butt" stroke-linejoin="round" stroke-dasharray="3 2.5" />
<path d="M335.2 738.9 L364.3 750.1 L362.0 758.3 L332.9 746.4Z" fill="#948d89" stroke="#857d78" stroke-width="0.7" />
<path d="M359.8 765.1 C361.1 765.6 365.1 765.8 367.3 768.0 C369.5 770.2 370.5 775.6 373.2 778.5 C375.9 781.4 381.9 784.0 383.7 785.1" fill="none" stroke="#b4b4b4" stroke-width="2.4" stroke-linecap="butt" />
<path d="M403.1 762.8 L397.1 785.1" fill="none" stroke="#b0b0b0" stroke-width="2" stroke-linecap="butt" stroke-linejoin="round" />
<path d="M591.6 714.0 L619.9 726.0 L614.5 739.0 L604.7 735.1 L601.4 742.3 L587.2 736.8Z" fill="#948d89" stroke="#857d78" stroke-width="0.7" />
<path d="M574.2 728.1 L587.2 732.5 L576.4 756.4 L567.6 753.2Z" fill="#948d89" stroke="#857d78" stroke-width="0.7" />
<path d="M587.2 730.3 L603.6 736.8 L591.6 763.0 L577.4 757.5Z" fill="#a59593" stroke="#857d78" stroke-width="0.5" />
<path d="M568.7 754.3 L591.6 764.1 L602.5 741.2 L612.3 744.5 L596.0 780.4 L587.2 777.1 L580.7 791.3 L560.0 783.7Z" fill="#948d89" stroke="#857d78" stroke-width="0.7" />
<path d="M-108 510.5 C-85.8 519.3 -19.3 545.8 25 563.5 C69.3 581.2 119.4 599.8 158 616.5 C196.6 633.2 224.8 649.3 256.7 663.7 C288.6 678.1 322.1 690.4 349.3 702.8 C376.5 715.2 398.9 727.7 420 738.3 C441.1 748.9 457.3 758.5 476 766.3 C494.7 774.1 513.3 779.9 532 785.3 C550.7 790.7 569.3 794.1 588 798.8 C606.7 803.5 625.3 807.5 644 813.3 C662.7 819.1 685.1 827.1 700 833.5 C714.9 839.9 723.6 846.0 733.6 851.5 C743.6 857.0 755.6 864.0 760 866.5" fill="none" stroke="#2b35c0" stroke-width="1.3" stroke-linecap="butt" stroke-dasharray="3.5 3" />
<path d="M-108 543.5 C-85.8 552.3 -19.3 578.8 25 596.5 C69.3 614.2 119.4 632.8 158 649.5 C196.6 666.2 224.8 682.3 256.7 696.7 C288.6 711.1 322.1 723.4 349.3 735.8 C376.5 748.2 398.9 760.7 420 771.3 C441.1 781.9 466.7 794.6 476 799.3" fill="none" stroke="#2b35c0" stroke-width="1.3" stroke-linecap="butt" stroke-dasharray="3.5 3" />
<path d="M-108 530.3 C-85.8 539.1 -19.3 565.6 25 583.3 C69.3 601.0 119.4 619.6 158 636.3 C196.6 653.0 224.8 669.1 256.7 683.5 C288.6 697.9 322.1 710.2 349.3 722.5999999999999 C376.5 735.0 398.9 747.5 420 758.0999999999999 C441.1 768.7 457.3 778.3 476 786.0999999999999 C494.7 793.9 513.3 799.7 532 805.0999999999999 C550.7 810.5 569.3 813.9 588 818.5999999999999 C606.7 823.3 625.3 827.3 644 833.0999999999999 C662.7 838.9 685.1 846.9 700 853.3 C714.9 859.7 723.6 865.8 733.6 871.3 C743.6 876.8 755.6 883.8 760 886.3" fill="none" stroke="#8a744f" stroke-width="22.5" stroke-linecap="butt" />
<path d="M-108 530.3 C-85.8 539.1 -19.3 565.6 25 583.3 C69.3 601.0 119.4 619.6 158 636.3 C196.6 653.0 224.8 669.1 256.7 683.5 C288.6 697.9 322.1 710.2 349.3 722.5999999999999 C376.5 735.0 398.9 747.5 420 758.0999999999999 C441.1 768.7 457.3 778.3 476 786.0999999999999 C494.7 793.9 513.3 799.7 532 805.0999999999999 C550.7 810.5 569.3 813.9 588 818.5999999999999 C606.7 823.3 625.3 827.3 644 833.0999999999999 C662.7 838.9 685.1 846.9 700 853.3 C714.9 859.7 723.6 865.8 733.6 871.3 C743.6 876.8 755.6 883.8 760 886.3" fill="none" stroke="#ab9270" stroke-width="21" stroke-linecap="butt" />
<path d="M-108 516.2 C-85.8 525.0 -19.3 551.5 25 569.2 C69.3 586.9 119.4 605.5 158 622.2 C196.6 638.9 224.8 655.0 256.7 669.4000000000001 C288.6 683.8 322.1 696.1 349.3 708.5 C376.5 720.9 398.9 733.4 420 744.0 C441.1 754.6 457.3 764.2 476 772.0 C494.7 779.8 513.3 785.6 532 791.0 C550.7 796.4 569.3 799.8 588 804.5 C606.7 809.2 625.3 813.2 644 819.0 C662.7 824.8 685.1 832.8 700 839.2 C714.9 845.6 723.6 851.7 733.6 857.2 C743.6 862.7 755.6 869.7 760 872.2" fill="none" stroke="#858585" stroke-width="5.4" stroke-linecap="butt" />
<path d="M-108 514.7 C-85.8 523.5 -19.3 550.0 25 567.7 C69.3 585.4 119.4 604.0 158 620.7 C196.6 637.4 224.8 653.5 256.7 667.9000000000001 C288.6 682.3 322.1 694.6 349.3 707.0 C376.5 719.4 398.9 731.9 420 742.5 C441.1 753.1 457.3 762.7 476 770.5 C494.7 778.3 513.3 784.1 532 789.5 C550.7 794.9 569.3 798.3 588 803.0 C606.7 807.7 625.3 811.7 644 817.5 C662.7 823.3 685.1 831.3 700 837.7 C714.9 844.1 723.6 850.2 733.6 855.7 C743.6 861.2 755.6 868.2 760 870.7" fill="none" stroke="#4e4e4e" stroke-width="1.1" stroke-linecap="butt" />
<path d="M-108 517.6 C-85.8 526.4 -19.3 552.9 25 570.6 C69.3 588.3 119.4 606.9 158 623.6 C196.6 640.3 224.8 656.4 256.7 670.8000000000001 C288.6 685.2 322.1 697.5 349.3 709.9 C376.5 722.3 398.9 734.8 420 745.4 C441.1 756.0 457.3 765.6 476 773.4 C494.7 781.2 513.3 787.0 532 792.4 C550.7 797.8 569.3 801.2 588 805.9 C606.7 810.6 625.3 814.6 644 820.4 C662.7 826.2 685.1 834.2 700 840.6 C714.9 847.0 723.6 853.1 733.6 858.6 C743.6 864.1 755.6 871.1 760 873.6" fill="none" stroke="#4e4e4e" stroke-width="1.1" stroke-linecap="butt" />
<path d="M1034.4 668.3 C1039.9 670.0 1055.8 675.4 1067.1 678.5 C1078.3 681.6 1091.4 685.4 1101.9 686.8 C1112.4 688.2 1121.9 687.9 1130.2 686.8 C1138.5 685.7 1145.7 682.9 1151.9 680.2 C1158.1 677.5 1164.7 672.0 1167.2 670.4" fill="none" stroke="#8a744f" stroke-width="14" stroke-linecap="butt" />
<path d="M1181.3 656.3 C1179.1 659.0 1173.3 665.7 1168.2 672.6 C1163.1 679.5 1158.0 686.9 1150.8 697.6 C1143.5 708.3 1134.0 722.6 1124.7 736.8 C1115.4 750.9 1104.8 767.6 1094.7 782.5 C1084.6 797.4 1074.4 812.8 1064.2 826.0 C1054.0 839.2 1040.3 854.0 1033.8 862.0 C1027.3 870.0 1026.5 871.9 1025.0 873.9" fill="none" stroke="#8a744f" stroke-width="19.4" stroke-linecap="butt" />
<path d="M1034.4 668.3 C1039.9 670.0 1055.8 675.4 1067.1 678.5 C1078.3 681.6 1091.4 685.4 1101.9 686.8 C1112.4 688.2 1121.9 687.9 1130.2 686.8 C1138.5 685.7 1145.7 682.9 1151.9 680.2 C1158.1 677.5 1164.7 672.0 1167.2 670.4" fill="none" stroke="#ab9270" stroke-width="12.6" stroke-linecap="butt" />
<path d="M1181.3 656.3 C1179.1 659.0 1173.3 665.7 1168.2 672.6 C1163.1 679.5 1158.0 686.9 1150.8 697.6 C1143.5 708.3 1134.0 722.6 1124.7 736.8 C1115.4 750.9 1104.8 767.6 1094.7 782.5 C1084.6 797.4 1074.4 812.8 1064.2 826.0 C1054.0 839.2 1040.3 854.0 1033.8 862.0 C1027.3 870.0 1026.5 871.9 1025.0 873.9" fill="none" stroke="#ab9270" stroke-width="18" stroke-linecap="butt" />
<path d="M479.0 656.3 C478.5 659.0 477.8 666.4 475.8 672.6 C473.8 678.8 471.1 685.1 467.1 693.3 C463.1 701.5 457.2 712.2 451.8 721.6 C446.4 731.0 440.9 741.2 434.4 749.9 C427.9 758.6 421.7 765.1 412.6 773.8 C403.5 782.5 388.2 794.5 380.0 802.1 C371.8 809.7 373.7 812.0 363.5 819.3 C353.3 826.6 335.1 837.9 318.7 846 C302.3 854.1 273.9 864.3 265 868" fill="none" stroke="#3e3e3e" stroke-width="8" stroke-linecap="butt" />
<path d="M479.0 656.3 C478.5 659.0 477.8 666.4 475.8 672.6 C473.8 678.8 471.1 685.1 467.1 693.3 C463.1 701.5 457.2 712.2 451.8 721.6 C446.4 731.0 440.9 741.2 434.4 749.9 C427.9 758.6 421.7 765.1 412.6 773.8 C403.5 782.5 388.2 794.5 380.0 802.1 C371.8 809.7 373.7 812.0 363.5 819.3 C353.3 826.6 335.1 837.9 318.7 846 C302.3 854.1 273.9 864.3 265 868" fill="none" stroke="#5a5a5a" stroke-width="5.8" stroke-linecap="butt" />
<path d="M479.0 656.3 C478.5 659.0 477.8 666.4 475.8 672.6 C473.8 678.8 471.1 685.1 467.1 693.3 C463.1 701.5 457.2 712.2 451.8 721.6 C446.4 731.0 440.9 741.2 434.4 749.9 C427.9 758.6 421.7 765.1 412.6 773.8 C403.5 782.5 388.2 794.5 380.0 802.1 C371.8 809.7 373.7 812.0 363.5 819.3 C353.3 826.6 335.1 837.9 318.7 846 C302.3 854.1 273.9 864.3 265 868" fill="none" stroke="#808080" stroke-width="4" stroke-linecap="butt" stroke-dasharray="4 6" />
<path d="M479.0 656.3 C478.5 659.0 477.8 666.4 475.8 672.6 C473.8 678.8 471.1 685.1 467.1 693.3 C463.1 701.5 457.2 712.2 451.8 721.6 C446.4 731.0 440.9 741.2 434.4 749.9 C427.9 758.6 421.7 765.1 412.6 773.8 C403.5 782.5 388.2 794.5 380.0 802.1 C371.8 809.7 373.7 812.0 363.5 819.3 C353.3 826.6 335.1 837.9 318.7 846 C302.3 854.1 273.9 864.3 265 868" fill="none" stroke="#3e3e3e" stroke-width="0.9" stroke-linecap="butt" />
<path d="M484.5 656.3 C484.1 659.0 485.0 663.9 482.3 672.6 C479.6 681.3 472.4 697.1 468.1 708.5 C463.8 719.9 459.8 730.3 456.6 741.2 C453.5 752.1 451.1 762.9 449.2 773.8 C447.3 784.7 445.9 790.9 445.3 806.5 C444.7 822.1 445.3 857.2 445.3 867.4" fill="none" stroke="#3e3e3e" stroke-width="10.5" stroke-linecap="butt" />
<path d="M484.5 656.3 C484.1 659.0 485.0 663.9 482.3 672.6 C479.6 681.3 472.4 697.1 468.1 708.5 C463.8 719.9 459.8 730.3 456.6 741.2 C453.5 752.1 451.1 762.9 449.2 773.8 C447.3 784.7 445.9 790.9 445.3 806.5 C444.7 822.1 445.3 857.2 445.3 867.4" fill="none" stroke="#5a5a5a" stroke-width="8.3" stroke-linecap="butt" />
<path d="M484.5 656.3 C484.1 659.0 485.0 663.9 482.3 672.6 C479.6 681.3 472.4 697.1 468.1 708.5 C463.8 719.9 459.8 730.3 456.6 741.2 C453.5 752.1 451.1 762.9 449.2 773.8 C447.3 784.7 445.9 790.9 445.3 806.5 C444.7 822.1 445.3 857.2 445.3 867.4" fill="none" stroke="#808080" stroke-width="6.5" stroke-linecap="butt" stroke-dasharray="4 6" />
<path d="M484.5 656.3 C484.1 659.0 485.0 663.9 482.3 672.6 C479.6 681.3 472.4 697.1 468.1 708.5 C463.8 719.9 459.8 730.3 456.6 741.2 C453.5 752.1 451.1 762.9 449.2 773.8 C447.3 784.7 445.9 790.9 445.3 806.5 C444.7 822.1 445.3 857.2 445.3 867.4" fill="none" stroke="#3e3e3e" stroke-width="0.9" stroke-linecap="butt" />
<path d="M1570.5 485 L1515 640" fill="none" stroke="#5a5a5a" stroke-width="11.5" stroke-linecap="butt" stroke-linejoin="round" />
<path d="M1573.230253593816 485.9776069319793 L1517.730253593816 640.9776069319794" fill="none" stroke="#a6a6a6" stroke-width="1.5" stroke-linecap="butt" stroke-linejoin="round" stroke-dasharray="5 6" />
<path d="M1567.769746406184 484.0223930680207 L1512.269746406184 639.0223930680206" fill="none" stroke="#a6a6a6" stroke-width="1.5" stroke-linecap="butt" stroke-linejoin="round" stroke-dasharray="5 6" />
<path d="M1570.5 485 L1515 640" fill="none" stroke="#3c3c3c" stroke-width="0.7" stroke-linecap="butt" stroke-linejoin="round" />
<path d="M1515.4 639 L1480 727" fill="none" stroke="#5a5a5a" stroke-width="11.5" stroke-linecap="butt" stroke-linejoin="round" />
<path d="M1518.0904687259201 640.0823021920178 L1482.69046872592 728.0823021920178" fill="none" stroke="#a6a6a6" stroke-width="1.5" stroke-linecap="butt" stroke-linejoin="round" stroke-dasharray="5 6" />
<path d="M1512.70953127408 637.9176978079822 L1477.30953127408 725.9176978079822" fill="none" stroke="#a6a6a6" stroke-width="1.5" stroke-linecap="butt" stroke-linejoin="round" stroke-dasharray="5 6" />
<path d="M1515.4 639 L1480 727" fill="none" stroke="#3c3c3c" stroke-width="0.7" stroke-linecap="butt" stroke-linejoin="round" />
<path d="M1480.3 726 L1457.4 800" fill="none" stroke="#5a5a5a" stroke-width="11.5" stroke-linecap="butt" stroke-linejoin="round" />
<path d="M1483.0703794339734 726.857320122135 L1460.1703794339735 800.857320122135" fill="none" stroke="#a6a6a6" stroke-width="1.5" stroke-linecap="butt" stroke-linejoin="round" stroke-dasharray="5 6" />
<path d="M1477.5296205660266 725.142679877865 L1454.6296205660267 799.142679877865" fill="none" stroke="#a6a6a6" stroke-width="1.5" stroke-linecap="butt" stroke-linejoin="round" stroke-dasharray="5 6" />
<path d="M1480.3 726 L1457.4 800" fill="none" stroke="#3c3c3c" stroke-width="0.7" stroke-linecap="butt" stroke-linejoin="round" />
<path d="M1457.7 799 L1433.5 870" fill="none" stroke="#5a5a5a" stroke-width="11.5" stroke-linecap="butt" stroke-linejoin="round" />
<path d="M1460.4449332122317 799.9355969540283 L1436.2449332122317 870.9355969540283" fill="none" stroke="#a6a6a6" stroke-width="1.5" stroke-linecap="butt" stroke-linejoin="round" stroke-dasharray="5 6" />
<path d="M1454.9550667877684 798.0644030459717 L1430.7550667877683 869.0644030459717" fill="none" stroke="#a6a6a6" stroke-width="1.5" stroke-linecap="butt" stroke-linejoin="round" stroke-dasharray="5 6" />
<path d="M1457.7 799 L1433.5 870" fill="none" stroke="#3c3c3c" stroke-width="0.7" stroke-linecap="butt" stroke-linejoin="round" />
<path d="M1311.0 755.3 L1370.0 797.8 L1414.4 836.9 L1431.8 852.2" fill="none" stroke="#7c7c7c" stroke-width="1.8" stroke-linecap="butt" stroke-linejoin="round" stroke-dasharray="6 3" />
<path d="M1315.4 753.1 L1370.0 792.3 L1418.8 833.7 L1436.2 848.9" fill="none" stroke="#7c7c7c" stroke-width="1.8" stroke-linecap="butt" stroke-linejoin="round" stroke-dasharray="6 3" />
<path d="M1303.1 749.1l8 8M1311.1 749.1l-8 8" stroke="#333" stroke-width="1.1"/>
<path d="M1419.1 841.6l8 8M1427.1 841.6l-8 8" stroke="#333" stroke-width="1.1"/>
<path d="M1184.9 671.3 C1185.1 672.9 1184.9 678.0 1186.0 681.1 C1187.1 684.2 1188.5 687.5 1191.4 689.8 C1194.3 692.1 1199.4 693.6 1203.4 694.7 C1207.4 695.8 1213.4 696.2 1215.4 696.5" fill="none" stroke="#3a3a3a" stroke-width="1" stroke-linecap="butt" />
<path d="M1175.1 681.1 L1175.1 705.6" fill="none" stroke="#3a3a3a" stroke-width="1" stroke-linecap="butt" stroke-linejoin="round" />
<path d="M1172.4 684.3 L1172.4 707.2" fill="none" stroke="#3a3a3a" stroke-width="1" stroke-linecap="butt" stroke-linejoin="round" />
<path d="M1175.1 681.6 C1176.4 683.7 1180.1 690.7 1182.7 694.1 C1185.3 697.5 1189.5 700.7 1190.9 702.0" fill="none" stroke="#3a3a3a" stroke-width="1" stroke-linecap="butt" />
<path d="M1151.2 717.5 C1153.5 716.1 1158.7 712.0 1165.3 709.4 C1171.9 706.8 1186.6 703.2 1190.9 702.0" fill="none" stroke="#3a3a3a" stroke-width="1" stroke-linecap="butt" />
<path d="M1149.5 719.7 C1154.0 718.8 1166.3 715.7 1176.2 714.3 C1186.1 712.9 1200.6 711.5 1208.8 711.5 C1217.0 711.5 1222.5 713.8 1225.2 714.3" fill="none" stroke="#3a3a3a" stroke-width="1" stroke-linecap="butt" />
<path d="M1100.0 758.9 C1107.2 755.5 1130.8 744.8 1143.5 738.2 C1156.2 731.6 1168.9 722.9 1176.2 719.2 C1183.5 715.5 1185.3 716.5 1187.1 715.9" fill="none" stroke="#3a3a3a" stroke-width="1" stroke-linecap="butt" />
<path d="M1165.3 720.8 L1195.8 746.9 L1209.9 766.5" fill="none" stroke="#555" stroke-width="3.2" stroke-linecap="butt" stroke-linejoin="round" />
<path d="M1165.3 720.8 L1195.8 746.9 L1209.9 766.5" fill="none" stroke="#8c8c8c" stroke-width="1" stroke-linecap="butt" stroke-linejoin="round" />
<path d="M1145.6 730.8l9 9M1154.6 730.8l-9 9" stroke="#333" stroke-width="1.1"/>
<path d="M1165.4 720.1l9 9M1174.4 720.1l-9 9" stroke="#333" stroke-width="1.1"/>
<g transform="translate(332.2 758.3)"><path d="M0 .5c3 1.200 6 1.200 9 0v7.500c0 3-2.200 5-4.500 5S0 11 0 8z" fill="#6b4a1c"/><path d="M2 4.500h2M5.500 4.500h2M2.500 9.500c1.300-1 2.700-1 4 0" stroke="#a08a6a" stroke-width=".9" fill="none"/><path d="M7.500 5c3.200 1.300 6.800 1.300 10 0v7.800c0 3.200-2.500 5.200-5 5.200s-5-2-5-5.200z" fill="#4f2f06"/><path d="M9.500 9.200h2.200M13.300 9.200h2.200" stroke="#a08a6a" stroke-width="1.100"/><path d="M9.800 12.500c1.500 2.400 4 2.400 5.500 0z" fill="#a08a6a"/></g>
<g transform="translate(106.2 623.9) rotate(20)" stroke="#33291a" fill="#33291a"><path d="M-5.5 0H3.5" stroke-width="1"/><path d="M5.5 0l-4 -2v4z" stroke="none"/></g>
<rect x="148.0" y="618.7" width="6.5" height="6.5" fill="#59609a"/>
<rect x="432.9" y="743.3" width="6.5" height="6.5" fill="#59609a"/>
<rect x="457.3" y="759.7" width="6.5" height="6.5" fill="#59609a"/>
<g transform="translate(892.5 702.5) scale(0.95)" stroke="#8e2a9c" stroke-width="1.5" fill="none"><path d="M0 1.5h12.5l-1.6 7H1.8z" fill="#8e2a9c" fill-opacity=".25"/><path d="M12.5 1.5L15 -1.5h1.5M2 11h10M4 1.5v7M7 1.5v7M10 1.5v7M1 4.5h11"/><circle cx="3.5" cy="12.6" r=".9"/><circle cx="10.5" cy="12.6" r=".9"/></g>
<rect x="1155.8" y="688.5" width="7.4" height="7.4" fill="#1878b0"/>
<rect x="1137.1" y="707.4" width="7.4" height="7.4" fill="#1878b0"/>
<rect x="1127.6" y="729.2" width="7" height="7" fill="#5a6096"/>
<rect x="1190.0" y="743.8" width="7" height="7" fill="#5a6096"/>
<g transform="translate(1079.0 804.3) rotate(125)" stroke="#33291a" fill="#33291a"><path d="M-4.5 0H2.5" stroke-width="1"/><path d="M4.5 0l-4 -2v4z" stroke="none"/></g>
<g transform="translate(1073.1 823.9) rotate(-55)" stroke="#33291a" fill="#33291a"><path d="M-4.5 0H2.5" stroke-width="1"/><path d="M4.5 0l-4 -2v4z" stroke="none"/></g>
<g transform="translate(1068.8 839.1) rotate(-55)" stroke="#33291a" fill="#33291a"><path d="M-3.5 0H1.5" stroke-width="1"/><path d="M3.5 0l-4 -2v4z" stroke="none"/></g>
<g transform="translate(1081.8 829.3)" fill="#5a3305"><path d="M0 0h16.800v15.800H0zM3.400 1.800h10v5.200h-10zM3.400 8.800h10v5.200h-10z" fill-rule="evenodd"/><path d="M.8 2h1.800v2H.8zM.8 6h1.800v2H.8zM.8 10h1.800v2H.8zM14.200 2H16v2h-1.800zM14.200 6H16v2h-1.800zM14.200 10H16v2h-1.800z" fill="#b09a80"/></g>
<rect x="1190.3" y="744.4" width="7.2" height="7.2" fill="#5a6096"/>
<rect x="1207.7" y="765.8" width="7.2" height="7.2" fill="#5a6096"/>
<rect x="1155.4" y="688.5" width="7.4" height="7.4" fill="#1878b0"/>
<g transform="translate(1267.5 808.6) scale(0.96)" fill="#5a3305"><path d="M0 4.600L8.500 0l8.500 4.600v1.700H0z"/><path d="M2.300 7.200h2.300v6.200H2.300zM7.300 7.200h2.300v6.200H7.300zM12.300 7.200h2.300v6.200h-2.300z"/><path d="M0 14.200h17v2H0z"/></g>
<g transform="translate(1213.5 707.4) rotate(5)" stroke="#333" fill="#333"><path d="M-5.0 0H3.0" stroke-width="1"/><path d="M5.0 0l-4 -2v4z" stroke="none"/></g>
<g transform="translate(1300.2 739.0) rotate(32)" stroke="#333" fill="#333"><path d="M-5.0 0H3.0" stroke-width="1"/><path d="M5.0 0l-4 -2v4z" stroke="none"/></g>
<path d="M1511.6 647.9l3 4" stroke="#c0584e" stroke-width="2.2"/>
<g transform="translate(296.5 669.5) scale(0.9)" stroke="#8e2a9c" stroke-width="1.5" fill="none"><path d="M0 1.5h12.5l-1.6 7H1.8z" fill="#8e2a9c" fill-opacity=".25"/><path d="M12.5 1.5L15 -1.5h1.5M2 11h10M4 1.5v7M7 1.5v7M10 1.5v7M1 4.5h11"/><circle cx="3.5" cy="12.6" r=".9"/><circle cx="10.5" cy="12.6" r=".9"/></g>
<rect x="591" y="805.4" width="19.7" height="41.3" rx="2" fill="#b9a88d" stroke="#8d7b5f" stroke-width=".8"/>
<g transform="translate(630.9 833.9) rotate(14)" stroke="#2e2416" fill="#2e2416"><path d="M-5.5 0H3.5" stroke-width="1"/><path d="M5.5 0l-4 -2v4z" stroke="none"/></g>
<g transform="translate(649.2 830.8) rotate(196)" stroke="#2e2416" fill="#2e2416"><path d="M-5.5 0H3.5" stroke-width="1"/><path d="M5.5 0l-4 -2v4z" stroke="none"/></g>
<rect x="703.2" y="840.2" width="7.5" height="7.5" fill="#59609a"/>
<text x="77" y="503.5" font-family="'DejaVu Sans', 'DejaVu Sans', sans-serif" font-size="14" font-weight="normal" font-style="italic" fill="#55534c" text-anchor="start" stroke="#a3a396" stroke-width="2" paint-order="stroke" stroke-linejoin="round" textLength="66" lengthAdjust="spacingAndGlyphs">Hardturm</text>
<text x="58.8" y="749.0" font-family="'DejaVu Sans', 'DejaVu Sans', sans-serif" font-size="12" font-weight="normal" font-style="normal" fill="#6a4f6e" text-anchor="start" stroke="#a09aa0" stroke-width="1.2" paint-order="stroke" stroke-linejoin="round" transform="rotate(45.5 58.8 749.0)" textLength="77" lengthAdjust="spacingAndGlyphs">Escher Wyss</text>
<text x="25.5" y="672" font-family="'DejaVu Sans', 'DejaVu Sans', sans-serif" font-size="12" font-weight="normal" font-style="normal" fill="#707070" text-anchor="start" stroke="#a8a4a8" stroke-width="1.6" paint-order="stroke" stroke-linejoin="round">cher</text>
<text x="25.5" y="688.6" font-family="'DejaVu Sans', 'DejaVu Sans', sans-serif" font-size="12" font-weight="normal" font-style="normal" fill="#707070" text-anchor="start" stroke="#a8a4a8" stroke-width="1.6" paint-order="stroke" stroke-linejoin="round">ros-</text>
<text x="25.5" y="705" font-family="'DejaVu Sans', 'DejaVu Sans', sans-serif" font-size="12" font-weight="normal" font-style="normal" fill="#707070" text-anchor="start" stroke="#a8a4a8" stroke-width="1.6" paint-order="stroke" stroke-linejoin="round">rkt</text>
<text x="123.2" y="644.6" font-family="'DejaVu Sans Condensed', 'DejaVu Sans', sans-serif" font-size="10.5" font-weight="normal" font-style="normal" fill="#4a5596" text-anchor="start" stroke="#a8a4ac" stroke-width="1.4" paint-order="stroke" stroke-linejoin="round">Sportw</text>
<text x="149.1" y="659.9" font-family="'DejaVu Sans Condensed', 'DejaVu Sans', sans-serif" font-size="10.5" font-weight="normal" font-style="normal" fill="#4a5596" text-anchor="start" stroke="#a8a4ac" stroke-width="1.4" paint-order="stroke" stroke-linejoin="round">Sp</text>
<text x="25.2" y="593.1" font-family="'DejaVu Sans', 'DejaVu Sans', sans-serif" font-size="10.5" font-weight="normal" font-style="normal" fill="#3a3226" text-anchor="start" stroke="#b39a78" stroke-width="1.2" paint-order="stroke" stroke-linejoin="round" transform="rotate(21.5 25.2 593.1)">stweidstrasse</text>
<text x="222.1" y="679.4" font-family="'DejaVu Sans', 'DejaVu Sans', sans-serif" font-size="10.5" font-weight="normal" font-style="normal" fill="#3a3226" text-anchor="start" stroke="#b39a78" stroke-width="1.2" paint-order="stroke" stroke-linejoin="round" transform="rotate(23.5 222.1 679.4)" textLength="111" lengthAdjust="spacingAndGlyphs">Pfingstweidstrasse</text>
<text x="401.8" y="724.8" font-family="'DejaVu Sans', 'DejaVu Sans', sans-serif" font-size="14" font-weight="normal" font-style="normal" fill="#222" text-anchor="start" stroke="#b9b9b9" stroke-width="2.2" paint-order="stroke" stroke-linejoin="round" textLength="133" lengthAdjust="spacingAndGlyphs">Hardturmviadukt</text>
<text x="432.2" y="784.3" font-family="'DejaVu Sans Condensed', 'DejaVu Sans', sans-serif" font-size="11" font-weight="normal" font-style="normal" fill="#5a6496" text-anchor="start" stroke="#a9a5ac" stroke-width="1.6" paint-order="stroke" stroke-linejoin="round" textLength="58" lengthAdjust="spacingAndGlyphs">Toni-Areal</text>
<text x="445.3" y="708.5" font-family="'DejaVu Sans Condensed', 'DejaVu Sans', sans-serif" font-size="10.5" font-weight="normal" font-style="normal" fill="#5a5a5a" text-anchor="start" stroke="#aaa" stroke-width="1.4" paint-order="stroke" stroke-linejoin="round" transform="rotate(-62 445.3 708.5)">Mühlew</text>
<text x="558.9" y="757.5" font-family="'DejaVu Sans', 'DejaVu Sans', sans-serif" font-size="10.5" font-weight="normal" font-style="normal" fill="#3a3226" text-anchor="start" stroke="#b39f7c" stroke-width="1.2" paint-order="stroke" stroke-linejoin="round" transform="rotate(-65.5 558.9 757.5)">Duttweilerstrass</text>
<text x="674.9" y="698.7" font-family="'DejaVu Sans', 'DejaVu Sans', sans-serif" font-size="18" font-weight="normal" font-style="normal" fill="#6a6a6a" text-anchor="start" stroke="#aba7a5" stroke-width="2.2" paint-order="stroke" stroke-linejoin="round" textLength="101" lengthAdjust="spacingAndGlyphs">Escher Wyss</text>
<text x="701.0" y="790.1" font-family="'DejaVu Sans', 'DejaVu Sans', sans-serif" font-size="13.5" font-weight="normal" font-style="normal" fill="#555" text-anchor="start" stroke="#9a938f" stroke-width="1.8" paint-order="stroke" stroke-linejoin="round" textLength="75" lengthAdjust="spacingAndGlyphs">Technopark</text>
<text x="784.1" y="806.0" font-family="'DejaVu Sans', 'DejaVu Sans', sans-serif" font-size="13.5" font-weight="normal" font-style="normal" fill="#1e1e1e" text-anchor="start" stroke="#a5a5ae" stroke-width="1.8" paint-order="stroke" stroke-linejoin="round" textLength="89.5" lengthAdjust="spacingAndGlyphs">Turbinenplatz</text>
<text x="922.3" y="810.4" font-family="'DejaVu Sans', 'DejaVu Sans', sans-serif" font-size="10.5" font-weight="normal" font-style="normal" fill="#444" text-anchor="start" stroke="#b0b0b0" stroke-width="1.4" paint-order="stroke" stroke-linejoin="round" transform="rotate(23.5 922.3 810.4)" textLength="84" lengthAdjust="spacingAndGlyphs">Giessereistrasse</text>
<text x="959.1" y="749.6" font-family="'DejaVu Sans', 'DejaVu Sans', sans-serif" font-size="12.5" font-weight="normal" font-style="normal" fill="#8d7b8d" text-anchor="start" textLength="80" lengthAdjust="spacingAndGlyphs">MAN Energy</text>
<text x="967.8" y="765.8" font-family="'DejaVu Sans', 'DejaVu Sans', sans-serif" font-size="12.5" font-weight="normal" font-style="normal" fill="#8d7b8d" text-anchor="start" textLength="62" lengthAdjust="spacingAndGlyphs">Solutions</text>
<text x="1109.5" y="754.2" font-family="'DejaVu Sans', 'DejaVu Sans', sans-serif" font-size="13" font-weight="normal" font-style="normal" fill="#4a5596" text-anchor="start" stroke="#a5a3aa" stroke-width="1.8" paint-order="stroke" stroke-linejoin="round" textLength="42" lengthAdjust="spacingAndGlyphs">Escher-</text>
<text x="1099.7" y="769.5" font-family="'DejaVu Sans', 'DejaVu Sans', sans-serif" font-size="13" font-weight="normal" font-style="normal" fill="#4a5596" text-anchor="start" stroke="#a5a3aa" stroke-width="1.8" paint-order="stroke" stroke-linejoin="round" textLength="62" lengthAdjust="spacingAndGlyphs">Wyss-Platz</text>
<text x="1089.9" y="780.3" font-family="'DejaVu Sans', 'DejaVu Sans', sans-serif" font-size="13" font-weight="normal" font-style="normal" fill="#4a5596" text-anchor="start" stroke="#a5a3aa" stroke-width="1.8" paint-order="stroke" stroke-linejoin="round" textLength="42" lengthAdjust="spacingAndGlyphs">Escher-</text>
<text x="1080.1" y="795.6" font-family="'DejaVu Sans', 'DejaVu Sans', sans-serif" font-size="13" font-weight="normal" font-style="normal" fill="#4a5596" text-anchor="start" stroke="#a5a3aa" stroke-width="1.8" paint-order="stroke" stroke-linejoin="round" textLength="62" lengthAdjust="spacingAndGlyphs">Wyss-Platz</text>
<text x="1107.3" y="840.2" font-family="'DejaVu Sans', 'DejaVu Sans', sans-serif" font-size="11" font-weight="normal" font-style="normal" fill="#333" text-anchor="start" stroke="#aaa" stroke-width="1.4" paint-order="stroke" stroke-linejoin="round" transform="rotate(30 1107.3 840.2)">Heinrich</text>
<path id="rampP" d="M1072 678.5C1095 689 1122 694 1142 688C1152 685 1160 680 1168 673" fill="none"/><text font-family="'DejaVu Sans', sans-serif" font-size="12.5" fill="#33291a" stroke="#b39f7c" stroke-width="1.2" paint-order="stroke" textLength="99" lengthAdjust="spacingAndGlyphs"><textPath href="#rampP">Hardturmrampe</textPath></text>
<text x="1047.5" y="862.0" font-family="'DejaVu Sans', 'DejaVu Sans', sans-serif" font-size="11" font-weight="normal" font-style="normal" fill="#33291a" text-anchor="start" stroke="#b39f7c" stroke-width="1.2" paint-order="stroke" stroke-linejoin="round" transform="rotate(-55 1047.5 862.0)">cke</text>
<text x="1190.3" y="791.7" font-family="'DejaVu Sans', 'DejaVu Sans', sans-serif" font-size="13" font-weight="normal" font-style="normal" fill="#4a5596" text-anchor="start" stroke="#8fae93" stroke-width="1.6" paint-order="stroke" stroke-linejoin="round" textLength="42" lengthAdjust="spacingAndGlyphs">Escher-</text>
<text x="1180.5" y="806.5" font-family="'DejaVu Sans', 'DejaVu Sans', sans-serif" font-size="13" font-weight="normal" font-style="normal" fill="#4a5596" text-anchor="start" stroke="#8fae93" stroke-width="1.6" paint-order="stroke" stroke-linejoin="round" textLength="62" lengthAdjust="spacingAndGlyphs">Wyss-Platz</text>
<text x="1214.2" y="702.4" font-family="'DejaVu Sans', 'DejaVu Sans', sans-serif" font-size="11" font-weight="normal" font-style="normal" fill="#333" text-anchor="start" stroke="#b9b9b9" stroke-width="1.6" paint-order="stroke" stroke-linejoin="round" transform="rotate(8 1214.2 702.4)" textLength="42" lengthAdjust="spacingAndGlyphs">Sihlquai</text>
<text x="1224.0" y="717.2" font-family="'DejaVu Sans', 'DejaVu Sans', sans-serif" font-size="11" font-weight="normal" font-style="normal" fill="#333" text-anchor="start" stroke="#b9b9b9" stroke-width="1.6" paint-order="stroke" stroke-linejoin="round" transform="rotate(14 1224.0 717.2)" textLength="62" lengthAdjust="spacingAndGlyphs">Zöllystrasse</text>
<text x="1262.1" y="831.5" font-family="'DejaVu Sans', 'DejaVu Sans', sans-serif" font-size="11" font-weight="normal" font-style="normal" fill="#333" text-anchor="start" stroke="#b4b4b4" stroke-width="1.6" paint-order="stroke" stroke-linejoin="round" transform="rotate(47 1262.1 831.5)">Limmatstr</text>
<text x="1340.5" y="717" font-family="'DejaVu Sans', 'DejaVu Sans', sans-serif" font-size="14.5" font-weight="normal" font-style="italic" fill="#46679c" text-anchor="start" stroke="#7c98a1" stroke-width="1.2" paint-order="stroke" stroke-linejoin="round" transform="rotate(29 1340.5 717)" textLength="54" lengthAdjust="spacingAndGlyphs">Limmat</text>
<text x="1341.5" y="675.4" font-family="'DejaVu Sans', 'DejaVu Sans', sans-serif" font-size="10.5" font-weight="normal" font-style="normal" fill="#444" text-anchor="start" stroke="#aaa" stroke-width="1.4" paint-order="stroke" stroke-linejoin="round" transform="rotate(31 1341.5 675.4)">Fahr-Weg</text>
<text x="1375.2" y="680.2" font-family="'DejaVu Sans', 'DejaVu Sans', sans-serif" font-size="10.5" font-weight="normal" font-style="normal" fill="#444" text-anchor="start" stroke="#b4b4b4" stroke-width="1.4" paint-order="stroke" stroke-linejoin="round" transform="rotate(27 1375.2 680.2)">asse</text>
<text x="1411.1" y="674.8" font-family="'DejaVu Sans', 'DejaVu Sans', sans-serif" font-size="10.5" font-weight="normal" font-style="normal" fill="#444" text-anchor="start" stroke="#b4b4b4" stroke-width="1.4" paint-order="stroke" stroke-linejoin="round" transform="rotate(27 1411.1 674.8)">sse</text>
<text x="1465" y="724.5" font-family="'DejaVu Sans', 'DejaVu Sans', sans-serif" font-size="11" font-weight="normal" font-style="normal" fill="#3c3c3c" text-anchor="start" stroke="#b4b4b4" stroke-width="1.4" paint-order="stroke" stroke-linejoin="round" transform="rotate(-62 1465 724.5)" textLength="74" lengthAdjust="spacingAndGlyphs">Dammstrasse</text>
<text x="1415.5" y="788.0" font-family="'DejaVu Sans', 'DejaVu Sans', sans-serif" font-size="13.5" font-weight="normal" font-style="normal" fill="#262626" text-anchor="start" stroke="#8aa3aa" stroke-width="1.8" paint-order="stroke" stroke-linejoin="round" textLength="86" lengthAdjust="spacingAndGlyphs">Limmatbrücke</text>
<text x="1426.4" y="803.2" font-family="'DejaVu Sans', 'DejaVu Sans', sans-serif" font-size="13.5" font-weight="normal" font-style="normal" fill="#262626" text-anchor="start" stroke="#8aa3aa" stroke-width="1.8" paint-order="stroke" stroke-linejoin="round" textLength="63.5" lengthAdjust="spacingAndGlyphs">Wipkingen</text>
<text x="1373.1" y="838.4" font-family="'DejaVu Sans', 'DejaVu Sans', sans-serif" font-size="12" font-weight="normal" font-style="italic" fill="#5f3d66" text-anchor="start" stroke="#a39aa2" stroke-width="1.4" paint-order="stroke" stroke-linejoin="round" textLength="50.5" lengthAdjust="spacingAndGlyphs">Swissmill</text>
<text x="1513.4" y="833.7" font-family="'DejaVu Sans', 'DejaVu Sans', sans-serif" font-size="12.5" font-weight="normal" font-style="italic" fill="#46679c" text-anchor="start" stroke="#7c98a1" stroke-width="1.2" paint-order="stroke" stroke-linejoin="round" transform="rotate(36 1513.4 833.7)">Unterwas</text>
<text x="1446.0" y="852.6" font-family="'DejaVu Sans', 'DejaVu Sans', sans-serif" font-size="11" font-weight="normal" font-style="normal" fill="#333" text-anchor="start" stroke="#b4b4b4" stroke-width="1.6" paint-order="stroke" stroke-linejoin="round" transform="rotate(36 1446.0 852.6)">Sihl</text>
<text x="1400.3" y="856.5" font-family="'DejaVu Sans', 'DejaVu Sans', sans-serif" font-size="11" font-weight="normal" font-style="normal" fill="#444" text-anchor="start" stroke="#aaa" stroke-width="1.4" paint-order="stroke" stroke-linejoin="round" transform="rotate(-60 1400.3 856.5)">eg</text>
<text x="1546.1" y="681.3" font-family="'DejaVu Sans', 'DejaVu Sans', sans-serif" font-size="10.5" font-weight="normal" font-style="normal" fill="#444" text-anchor="start" stroke="#aaa" stroke-width="1.4" paint-order="stroke" stroke-linejoin="round" transform="rotate(-68 1546.1 681.3)">Imf</text>
<text x="1526.2" y="526.8" font-family="'DejaVu Sans', 'DejaVu Sans', sans-serif" font-size="11.5" font-weight="bold" font-style="normal" fill="#2f3f8c" text-anchor="start" stroke="#a0a0a8" stroke-width="1.6" paint-order="stroke" stroke-linejoin="round" textLength="43" lengthAdjust="spacingAndGlyphs">Zürich</text>
<text x="1511.0" y="543.3" font-family="'DejaVu Sans', 'DejaVu Sans', sans-serif" font-size="11.5" font-weight="bold" font-style="normal" fill="#2f3f8c" text-anchor="start" stroke="#a0a0a8" stroke-width="1.6" paint-order="stroke" stroke-linejoin="round" textLength="68" lengthAdjust="spacingAndGlyphs">Wipkingen</text>
<text x="1459.8" y="638.5" font-family="'DejaVu Sans', 'DejaVu Sans', sans-serif" font-size="10.5" font-weight="normal" font-style="normal" fill="#444" text-anchor="start" stroke="#b4b4b4" stroke-width="1.4" paint-order="stroke" stroke-linejoin="round" transform="rotate(19 1459.8 638.5)" textLength="36" lengthAdjust="spacingAndGlyphs">strasse</text>
<text x="1548.4" y="682.0" font-family="'DejaVu Sans', 'DejaVu Sans', sans-serif" font-size="10.5" font-weight="normal" font-style="normal" fill="#444" text-anchor="start" stroke="#a4a4a4" stroke-width="1.4" paint-order="stroke" stroke-linejoin="round" transform="rotate(-71 1548.4 682.0)" textLength="68" lengthAdjust="spacingAndGlyphs">Imfeldstrasse</text>
<text x="600.9" y="822.5" font-family="'DejaVu Sans', 'DejaVu Sans', sans-serif" font-size="11.5" font-weight="normal" font-style="normal" fill="#4a4030" text-anchor="middle">1</text>
<text x="600.9" y="838" font-family="'DejaVu Sans', 'DejaVu Sans', sans-serif" font-size="11.5" font-weight="normal" font-style="normal" fill="#4a4030" text-anchor="middle">3</text>
<text x="672.7" y="863.5" font-family="'DejaVu Sans', 'DejaVu Sans', sans-serif" font-size="11.5" font-weight="normal" font-style="normal" fill="#4a5596" text-anchor="start" stroke="#a9a5ac" stroke-width="1.6" paint-order="stroke" stroke-linejoin="round" textLength="67" lengthAdjust="spacingAndGlyphs">Technopark</text>
<text x="580" y="863" font-family="'DejaVu Sans', 'DejaVu Sans', sans-serif" font-size="10" font-weight="normal" font-style="normal" fill="#555" text-anchor="start" stroke="#aaa" stroke-width="1.2" paint-order="stroke" stroke-linejoin="round" transform="rotate(-73 580 863)">tweid</text>
</svg>
  <div style="position:absolute;left:7px;top:7px;width:25px;height:245px;border-radius:3px;background:rgba(255,255,255,.2)"></div>
  <div class="mb" style="left:10px;top:10px;width:19px;height:19px"><svg width="19" height="19" viewBox="0 0 19 19"><path d="M9.500 5.500v8M5.500 9.500h8" stroke="#c9c9c9" stroke-width="2.200"/></svg></div>
  <div class="mb" style="left:10px;top:74px;width:19px;height:10px;border-radius:2.500px"></div>
  <div class="mb" style="left:10px;top:229px;width:19px;height:19px"><svg width="19" height="19" viewBox="0 0 19 19"><path d="M5.500 9.500h8" stroke="#c9c9c9" stroke-width="2.200"/></svg></div>
  <div class="mb" style="left:1521px;top:10px;width:19px;height:19px"><svg width="19" height="19" viewBox="0 0 19 19"><path d="M5.500 13.500L13.500 5.500M9.300 5.300h4.400v4.400M5.300 9.300v4.400h4.400" stroke="#c9c9c9" stroke-width="1.500" fill="none"/></svg></div>
  <div class="mb" style="left:1514.500px;top:45px;width:25px;height:25px"><svg width="25" height="25" viewBox="-.5 -.2 24.500 24.500"><path d="M12 4l8 5.500-8 5.500-8-5.500z" fill="none" stroke="#d6d6d6" stroke-width="1.700" stroke-linejoin="round"/><path d="M4.300 14.300L12 19.700l7.700-5.400" fill="none" stroke="#d6d6d6" stroke-width="1.700" stroke-linejoin="round" stroke-linecap="round"/></svg></div>
</div>
<!-- FOOTER -->
<div id="ftr">
  <div class="gbtn" style="left:1528px;top:12px;width:64px"><div class="t md" style="left:17.6px">Next</div></div>
</div>
<!-- DIALOG -->
<div id="dlg">
  <div class="t md" style="left:24.8px;top:30.1px;font-size:20px;color:#212121;letter-spacing:-.45px">New GIS Energy Resource</div>
  <div style="position:absolute;left:24px;top:82px;width:20px;height:20px;border-radius:50%;border:2px solid #666"></div>
  <div class="t" style="left:51.8px;top:84.3px;font-size:14px;color:#3a3a3a;letter-spacing:-.2px">Solar Resource</div>
  <div style="position:absolute;left:161px;top:82px;width:20px;height:20px;border-radius:50%;border:2px solid #21ce86"></div>
  <div style="position:absolute;left:166px;top:87px;width:10px;height:10px;border-radius:50%;background:#21ce86"></div>
  <div class="t" style="left:188.7px;top:84.3px;font-size:14px;color:#3a3a3a;letter-spacing:-.2px">Wind Resource</div>

  <!-- row 1 -->
  <div class="t lab" style="left:29.3px;top:117.3px">Energy Carrier</div>
  <div class="t val" style="left:29.3px;top:135.2px">Wind</div>
  <div class="arr" style="left:381.5px;top:140.5px"></div>
  <div class="ul" style="left:29px;top:156px"></div>
  <div class="t req" style="left:29.3px;top:163.1px">* Required</div>

  <div class="t lab" style="left:430.3px;top:117.3px">Hub</div>
  <div class="t val" style="left:430.3px;top:135.2px">Hub warehouse</div>
  <div class="arr" style="left:782.5px;top:140.5px"></div>
  <div class="ul" style="left:430px;top:156px"></div>
  <div class="t req" style="left:430.3px;top:163.1px">* Required</div>

  <!-- row 2 -->
  <div class="t lab" style="left:29.3px;top:189.3px">Terrain type</div>
  <div class="t val" style="left:29.3px;top:207.2px">Large towns</div>
  <div class="arr" style="left:381.5px;top:212.5px"></div>
  <div class="ul" style="left:29px;top:228px"></div>
  <div class="t req" style="left:29.3px;top:235.1px">* Required</div>

  <div class="t lab" style="left:430.3px;top:189.3px">Roughness length (m)</div>
  <div class="t val" style="left:430.3px;top:207.2px">0,6</div>
  <div class="ul" style="left:430px;top:228px"></div>
  <div class="t req" style="left:430.3px;top:235.1px">* Required</div>

  <div class="t lab" style="left:831.3px;top:189.3px">Height (m)</div>
  <div class="t val" style="left:831.3px;top:207.2px">9</div>
  <div class="ul" style="left:831px;top:228px"></div>
  <div class="t req" style="left:831.3px;top:235.1px">* Required</div>

  <!-- row 3 -->
  <div class="t lab" style="left:29.3px;top:262.3px">Available Resource Area (m<span style="font-size:7.5px;position:relative;top:-3px">2</span>)</div>
  <div class="t val" style="left:29.3px;top:280.2px">3000</div>
  <div class="ul" style="left:29px;top:301px"></div>
  <div class="t req" style="left:29.3px;top:307.1px">* Required</div>

  <!-- buttons -->
  <div style="position:absolute;left:24px;top:359px;width:75px;height:36px;border-radius:4px;background:#fff;box-shadow:0 3px 1px -2px rgba(0,0,0,.2),0 2px 2px 0 rgba(0,0,0,.14),0 1px 5px 0 rgba(0,0,0,.12)"><div class="t md" style="left:16.6px;top:10.2px;font-size:14px;color:#2a2a2a;letter-spacing:-.3px">Cancel</div></div>
  <div style="position:absolute;left:107px;top:359px;width:64px;height:36px;border-radius:4px;background:#21ce86;box-shadow:0 3px 1px -2px rgba(0,0,0,.2),0 2px 2px 0 rgba(0,0,0,.14),0 1px 5px 0 rgba(0,0,0,.12)"><div class="t md" style="left:19px;top:10.2px;font-size:14px;color:#fff !important;-webkit-text-stroke:.6px #fff"><span style="color:#fff">Add</span></div></div>
</div>
</body>
</html>
